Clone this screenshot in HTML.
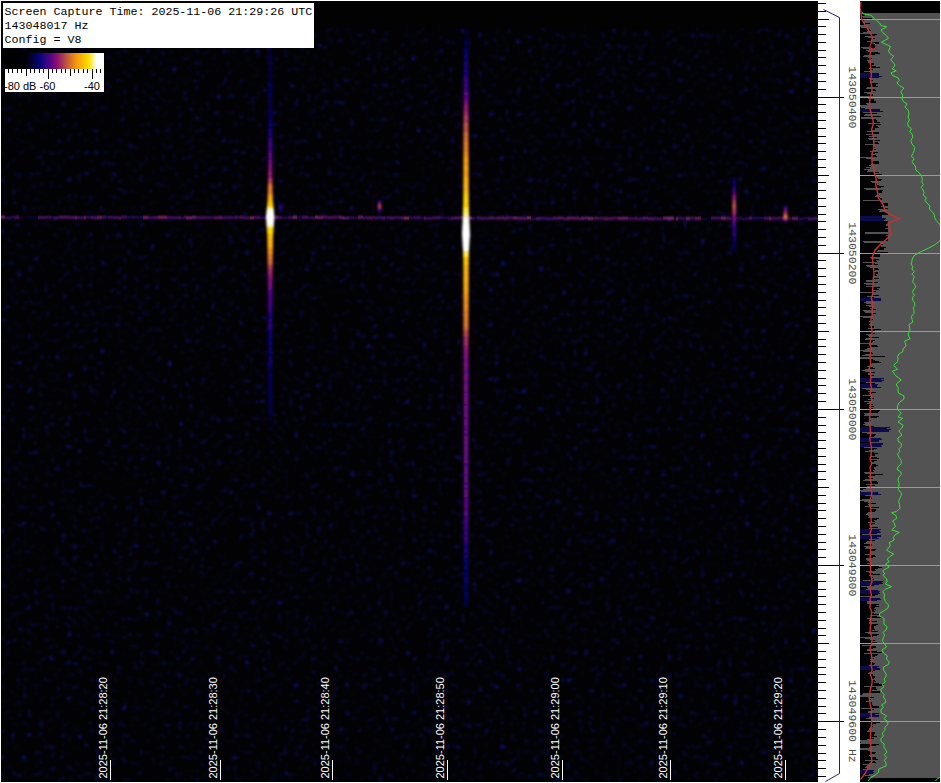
<!DOCTYPE html><html><head><meta charset="utf-8"><style>html,body{margin:0;padding:0;background:#fff;width:941px;height:783px;overflow:hidden;position:relative}.ab{position:absolute}.mono{font-family:"Liberation Mono",monospace}.sans{font-family:"Liberation Sans",sans-serif}</style></head><body><svg class="ab" style="left:0;top:0" width="941" height="783" viewBox="0 0 941 783" shape-rendering="crispEdges"><defs><filter id="bl" x="-20%" y="-300%" width="140%" height="700%"><feGaussianBlur stdDeviation="0.6 0.9"/></filter><filter id="bl2" x="-50%" y="-50%" width="200%" height="200%"><feGaussianBlur stdDeviation="0.8 1.2"/></filter><clipPath id="spc"><rect x="1" y="1" width="817" height="781"/></clipPath><clipPath id="pnc"><rect x="860" y="1" width="80" height="781"/></clipPath></defs><rect x="1" y="1" width="817" height="781" fill="#020203"/><defs><filter id="nz" filterUnits="userSpaceOnUse" x="1" y="28" width="817" height="754" color-interpolation-filters="sRGB"><feTurbulence type="fractalNoise" baseFrequency="0.18" numOctaves="2" seed="5" result="t"/><feColorMatrix in="t" type="matrix" values="0 0 0 0 0  0 0 0 0 0  1 0 0 0 0  0 0 0 0 1"/><feComponentTransfer><feFuncB type="table" tableValues="0 0 0 0 0 0 0.01 0.11 0.36 0.6 0.85"/><feFuncA type="linear" slope="0" intercept="1"/></feComponentTransfer><feColorMatrix type="matrix" values="0 0 0.09 0 0.008  0 0 0.09 0 0.008  0 0 0.95 0 0.016  0 0 0 0 1"/><feGaussianBlur stdDeviation="0.8"/></filter></defs><rect x="1" y="28" width="817" height="754" fill="#000" filter="url(#nz)" shape-rendering="auto"/><g clip-path="url(#spc)" filter="url(#bl)" shape-rendering="auto"><rect x="1" y="216.14" width="4" height="2" fill="#a42d88"/><rect x="5" y="216.83" width="6" height="2" fill="#371175"/><rect x="11" y="216.16" width="3" height="2" fill="#320f71"/><rect x="14" y="216.55" width="2" height="2" fill="#531587"/><rect x="16" y="216.15" width="3" height="2" fill="#6a1a8a"/><rect x="19" y="216.14" width="6" height="2" fill="#0c0832"/><rect x="25" y="216.19" width="3" height="2" fill="#0c0832"/><rect x="28" y="216.18" width="4" height="2" fill="#0c0832"/><rect x="32" y="216.54" width="6" height="2" fill="#0c0832"/><rect x="38" y="216.50" width="2" height="2" fill="#6c1a8a"/><rect x="40" y="216.57" width="6" height="2" fill="#5e1789"/><rect x="46" y="216.24" width="5" height="2" fill="#5b1688"/><rect x="51" y="216.50" width="3" height="2" fill="#2e0e6d"/><rect x="54" y="216.88" width="4" height="2" fill="#5d1788"/><rect x="58" y="216.37" width="2" height="2" fill="#571688"/><rect x="60" y="216.16" width="5" height="2" fill="#7b1e8c"/><rect x="65" y="216.35" width="6" height="2" fill="#771d8b"/><rect x="71" y="216.46" width="4" height="2" fill="#6a1a8a"/><rect x="75" y="216.63" width="2" height="2" fill="#a72f87"/><rect x="77" y="216.56" width="2" height="2" fill="#5e1789"/><rect x="79" y="216.63" width="5" height="2" fill="#611889"/><rect x="84" y="216.59" width="2" height="2" fill="#a22c88"/><rect x="86" y="216.20" width="5" height="2" fill="#3e127b"/><rect x="91" y="216.50" width="3" height="2" fill="#791d8c"/><rect x="94" y="216.81" width="3" height="2" fill="#69198a"/><rect x="97" y="216.43" width="5" height="2" fill="#a02a89"/><rect x="102" y="216.28" width="4" height="2" fill="#611889"/><rect x="106" y="216.29" width="2" height="2" fill="#2b0e6b"/><rect x="108" y="216.33" width="5" height="2" fill="#581688"/><rect x="113" y="216.55" width="3" height="2" fill="#611889"/><rect x="116" y="216.59" width="3" height="2" fill="#67198a"/><rect x="119" y="216.86" width="2" height="2" fill="#771d8b"/><rect x="121" y="216.18" width="6" height="2" fill="#621889"/><rect x="127" y="216.27" width="5" height="2" fill="#250d66"/><rect x="132" y="216.18" width="3" height="2" fill="#381176"/><rect x="135" y="216.39" width="6" height="2" fill="#270d67"/><rect x="141" y="216.40" width="2" height="2" fill="#2a0e6a"/><rect x="143" y="216.48" width="4" height="2" fill="#ab3286"/><rect x="147" y="216.47" width="2" height="2" fill="#7d1e8c"/><rect x="149" y="216.70" width="5" height="2" fill="#561588"/><rect x="154" y="216.51" width="4" height="2" fill="#6f1b8a"/><rect x="158" y="216.22" width="3" height="2" fill="#a83087"/><rect x="161" y="216.34" width="6" height="2" fill="#b13684"/><rect x="167" y="216.39" width="2" height="2" fill="#5c1788"/><rect x="169" y="216.53" width="3" height="2" fill="#5a1688"/><rect x="172" y="216.75" width="6" height="2" fill="#5a1688"/><rect x="178" y="216.69" width="3" height="2" fill="#751c8b"/><rect x="181" y="216.68" width="3" height="2" fill="#341073"/><rect x="184" y="216.25" width="2" height="2" fill="#651989"/><rect x="186" y="216.85" width="6" height="2" fill="#a62e88"/><rect x="192" y="216.28" width="4" height="2" fill="#a32c88"/><rect x="196" y="216.49" width="3" height="2" fill="#5f1789"/><rect x="199" y="216.62" width="6" height="2" fill="#661989"/><rect x="205" y="216.41" width="2" height="2" fill="#551588"/><rect x="207" y="216.73" width="3" height="2" fill="#581688"/><rect x="210" y="216.68" width="4" height="2" fill="#441480"/><rect x="214" y="216.68" width="5" height="2" fill="#7b1d8c"/><rect x="219" y="216.57" width="3" height="2" fill="#97248c"/><rect x="222" y="216.76" width="5" height="2" fill="#571588"/><rect x="227" y="216.54" width="5" height="2" fill="#601889"/><rect x="232" y="216.68" width="3" height="2" fill="#3f127c"/><rect x="235" y="216.45" width="2" height="2" fill="#7a1d8c"/><rect x="237" y="216.30" width="3" height="2" fill="#591688"/><rect x="240" y="216.36" width="4" height="2" fill="#721c8b"/><rect x="244" y="216.83" width="6" height="2" fill="#561588"/><rect x="250" y="216.75" width="4" height="2" fill="#ad3485"/><rect x="254" y="216.50" width="6" height="2" fill="#791d8c"/><rect x="260" y="216.80" width="6" height="2" fill="#351073"/><rect x="266" y="216.22" width="3" height="2" fill="#731c8b"/><rect x="269" y="216.55" width="3" height="2" fill="#711b8b"/><rect x="272" y="216.49" width="4" height="2" fill="#68198a"/><rect x="276" y="216.25" width="2" height="2" fill="#98248b"/><rect x="278" y="216.55" width="2" height="2" fill="#67198a"/><rect x="280" y="216.50" width="2" height="2" fill="#6c1a8a"/><rect x="282" y="216.51" width="6" height="2" fill="#2d0e6c"/><rect x="288" y="216.52" width="5" height="2" fill="#5b1688"/><rect x="293" y="216.26" width="4" height="2" fill="#b53983"/><rect x="297" y="216.45" width="5" height="2" fill="#270d68"/><rect x="302" y="216.28" width="2" height="2" fill="#631889"/><rect x="304" y="216.24" width="4" height="2" fill="#781d8b"/><rect x="308" y="216.90" width="4" height="2" fill="#42137e"/><rect x="312" y="216.85" width="3" height="2" fill="#541587"/><rect x="315" y="216.28" width="3" height="2" fill="#b33884"/><rect x="318" y="216.50" width="5" height="2" fill="#a42d88"/><rect x="323" y="216.19" width="4" height="2" fill="#701b8b"/><rect x="327" y="216.50" width="6" height="2" fill="#701b8b"/><rect x="333" y="216.26" width="6" height="2" fill="#67198a"/><rect x="339" y="216.44" width="3" height="2" fill="#9a268b"/><rect x="342" y="216.84" width="2" height="2" fill="#9c288a"/><rect x="344" y="217.00" width="5" height="2" fill="#6e1b8a"/><rect x="349" y="216.72" width="5" height="2" fill="#431380"/><rect x="354" y="216.83" width="4" height="2" fill="#250c66"/><rect x="358" y="216.31" width="5" height="2" fill="#9f2a89"/><rect x="363" y="216.99" width="2" height="2" fill="#541587"/><rect x="365" y="216.33" width="2" height="2" fill="#551588"/><rect x="367" y="216.82" width="6" height="2" fill="#791d8c"/><rect x="373" y="216.43" width="2" height="2" fill="#5b1688"/><rect x="375" y="217.10" width="3" height="2" fill="#581688"/><rect x="378" y="216.72" width="4" height="2" fill="#591688"/><rect x="382" y="217.17" width="3" height="2" fill="#741c8b"/><rect x="385" y="216.82" width="2" height="2" fill="#3d127a"/><rect x="387" y="216.75" width="3" height="2" fill="#5b1688"/><rect x="390" y="217.11" width="5" height="2" fill="#69198a"/><rect x="395" y="216.60" width="6" height="2" fill="#5a1688"/><rect x="401" y="216.95" width="3" height="2" fill="#701b8b"/><rect x="404" y="217.12" width="5" height="2" fill="#b83c82"/><rect x="409" y="216.67" width="2" height="2" fill="#3d127a"/><rect x="411" y="216.77" width="3" height="2" fill="#3a1178"/><rect x="414" y="216.67" width="6" height="2" fill="#5d1788"/><rect x="420" y="216.72" width="4" height="2" fill="#290d6a"/><rect x="424" y="217.29" width="2" height="2" fill="#7b1e8c"/><rect x="426" y="217.23" width="6" height="2" fill="#521487"/><rect x="432" y="216.85" width="3" height="2" fill="#501487"/><rect x="435" y="216.75" width="5" height="2" fill="#6e1b8a"/><rect x="440" y="216.68" width="2" height="2" fill="#40137d"/><rect x="442" y="216.82" width="6" height="2" fill="#240c65"/><rect x="448" y="217.28" width="3" height="2" fill="#451481"/><rect x="451" y="217.31" width="3" height="2" fill="#701b8b"/><rect x="454" y="217.01" width="5" height="2" fill="#701b8b"/><rect x="459" y="216.67" width="4" height="2" fill="#6d1a8a"/><rect x="463" y="217.29" width="6" height="2" fill="#711b8b"/><rect x="469" y="217.12" width="3" height="2" fill="#b03684"/><rect x="472" y="217.39" width="2" height="2" fill="#6a1a8a"/><rect x="474" y="217.19" width="3" height="2" fill="#240c65"/><rect x="477" y="216.73" width="2" height="2" fill="#641989"/><rect x="479" y="217.09" width="2" height="2" fill="#6f1b8a"/><rect x="481" y="217.45" width="2" height="2" fill="#6e1d85"/><rect x="483" y="217.31" width="6" height="2" fill="#5c1a7a"/><rect x="489" y="216.94" width="5" height="2" fill="#6e1d85"/><rect x="494" y="217.11" width="3" height="2" fill="#5f1a7b"/><rect x="497" y="216.99" width="5" height="2" fill="#641b80"/><rect x="502" y="216.84" width="2" height="2" fill="#7d2087"/><rect x="504" y="217.33" width="3" height="2" fill="#7d2087"/><rect x="507" y="216.84" width="6" height="2" fill="#6d1c85"/><rect x="513" y="216.98" width="4" height="2" fill="#982687"/><rect x="517" y="217.20" width="5" height="2" fill="#7a1f87"/><rect x="522" y="217.28" width="5" height="2" fill="#7d1e8c"/><rect x="527" y="216.87" width="4" height="2" fill="#b73a83"/><rect x="531" y="217.67" width="5" height="2" fill="#351073"/><rect x="536" y="217.63" width="4" height="2" fill="#791d8c"/><rect x="540" y="217.32" width="2" height="2" fill="#561588"/><rect x="542" y="217.31" width="4" height="2" fill="#40137d"/><rect x="546" y="217.64" width="2" height="2" fill="#5a1688"/><rect x="548" y="217.69" width="5" height="2" fill="#571688"/><rect x="553" y="217.28" width="5" height="2" fill="#711b8b"/><rect x="558" y="216.96" width="5" height="2" fill="#761c8b"/><rect x="563" y="217.72" width="4" height="2" fill="#6f1d86"/><rect x="567" y="217.29" width="2" height="2" fill="#9c2986"/><rect x="569" y="217.06" width="5" height="2" fill="#832187"/><rect x="574" y="217.24" width="5" height="2" fill="#832187"/><rect x="579" y="217.78" width="2" height="2" fill="#741e86"/><rect x="581" y="217.29" width="3" height="2" fill="#9f2c86"/><rect x="584" y="217.07" width="4" height="2" fill="#771e86"/><rect x="588" y="217.50" width="5" height="2" fill="#aa3383"/><rect x="593" y="217.44" width="2" height="2" fill="#611b7d"/><rect x="595" y="217.12" width="3" height="2" fill="#741e86"/><rect x="598" y="217.37" width="6" height="2" fill="#5b1a78"/><rect x="604" y="217.62" width="4" height="2" fill="#802087"/><rect x="608" y="217.55" width="5" height="2" fill="#741e86"/><rect x="613" y="217.16" width="5" height="2" fill="#5f1a7b"/><rect x="618" y="217.28" width="6" height="2" fill="#a02c85"/><rect x="624" y="217.21" width="4" height="2" fill="#a02c86"/><rect x="628" y="217.54" width="3" height="2" fill="#551873"/><rect x="631" y="217.56" width="4" height="2" fill="#561875"/><rect x="635" y="217.43" width="2" height="2" fill="#771e86"/><rect x="637" y="217.70" width="6" height="2" fill="#561875"/><rect x="643" y="217.20" width="5" height="2" fill="#7c1e8c"/><rect x="648" y="217.78" width="6" height="2" fill="#741c8b"/><rect x="654" y="217.42" width="2" height="2" fill="#5b1688"/><rect x="656" y="217.75" width="5" height="2" fill="#5e1789"/><rect x="661" y="217.71" width="2" height="2" fill="#320f71"/><rect x="663" y="217.16" width="5" height="2" fill="#a72f87"/><rect x="668" y="217.30" width="6" height="2" fill="#b83b82"/><rect x="674" y="217.88" width="2" height="2" fill="#280d69"/><rect x="676" y="217.62" width="2" height="2" fill="#af3585"/><rect x="678" y="217.10" width="5" height="2" fill="#3e127b"/><rect x="683" y="217.62" width="3" height="2" fill="#431380"/><rect x="686" y="217.52" width="4" height="2" fill="#ac3386"/><rect x="690" y="217.16" width="5" height="2" fill="#551588"/><rect x="695" y="217.31" width="6" height="2" fill="#9d288a"/><rect x="701" y="217.90" width="6" height="2" fill="#0c0832"/><rect x="707" y="217.81" width="4" height="2" fill="#0c0832"/><rect x="711" y="217.12" width="5" height="2" fill="#69198a"/><rect x="716" y="217.12" width="5" height="2" fill="#5e1789"/><rect x="721" y="217.16" width="5" height="2" fill="#ad3386"/><rect x="726" y="217.28" width="3" height="2" fill="#7a1d8c"/><rect x="729" y="217.39" width="2" height="2" fill="#701b8b"/><rect x="731" y="217.69" width="5" height="2" fill="#3f127c"/><rect x="736" y="217.26" width="6" height="2" fill="#341073"/><rect x="742" y="217.71" width="3" height="2" fill="#2b0e6b"/><rect x="745" y="217.59" width="4" height="2" fill="#391177"/><rect x="749" y="217.15" width="3" height="2" fill="#791d8c"/><rect x="752" y="217.27" width="6" height="2" fill="#310f70"/><rect x="758" y="217.15" width="6" height="2" fill="#250c66"/><rect x="764" y="217.35" width="5" height="2" fill="#701b8b"/><rect x="769" y="217.36" width="2" height="2" fill="#b73a83"/><rect x="771" y="217.47" width="3" height="2" fill="#68198a"/><rect x="774" y="217.40" width="4" height="2" fill="#611889"/><rect x="778" y="217.16" width="4" height="2" fill="#551588"/><rect x="782" y="217.20" width="2" height="2" fill="#7b1e8c"/><rect x="784" y="217.35" width="3" height="2" fill="#731c8b"/><rect x="787" y="217.26" width="5" height="2" fill="#3c1279"/><rect x="792" y="217.39" width="6" height="2" fill="#9d288a"/><rect x="798" y="217.75" width="5" height="2" fill="#310f70"/><rect x="803" y="217.15" width="5" height="2" fill="#240c65"/><rect x="808" y="217.82" width="2" height="2" fill="#721b8b"/><rect x="810" y="217.86" width="4" height="2" fill="#5f1789"/><rect x="814" y="217.35" width="2" height="2" fill="#701b8b"/><rect x="816" y="217.58" width="4" height="2" fill="#701b8b"/></g><g filter="url(#bl2)" shape-rendering="auto"><rect x="268.60" y="48" width="3.20" height="1" fill="#03034c"/><rect x="268.59" y="49" width="3.21" height="1" fill="#04045a"/><rect x="268.59" y="50" width="3.22" height="1" fill="#00000a"/><rect x="268.59" y="51" width="3.23" height="1" fill="#030350"/><rect x="268.58" y="52" width="3.24" height="1" fill="#00000f"/><rect x="268.58" y="53" width="3.24" height="1" fill="#030348"/><rect x="268.57" y="54" width="3.25" height="1" fill="#020232"/><rect x="268.57" y="55" width="3.26" height="1" fill="#03034f"/><rect x="268.57" y="56" width="3.27" height="1" fill="#030351"/><rect x="268.56" y="57" width="3.27" height="1" fill="#04045d"/><rect x="268.56" y="58" width="3.28" height="1" fill="#030355"/><rect x="268.55" y="59" width="3.29" height="1" fill="#010117"/><rect x="268.55" y="60" width="3.30" height="1" fill="#02023a"/><rect x="268.55" y="61" width="3.31" height="1" fill="#00000e"/><rect x="268.54" y="62" width="3.31" height="1" fill="#040463"/><rect x="268.54" y="63" width="3.32" height="1" fill="#02022a"/><rect x="268.54" y="64" width="3.33" height="1" fill="#03034f"/><rect x="268.53" y="65" width="3.34" height="1" fill="#01011e"/><rect x="268.53" y="66" width="3.35" height="1" fill="#010127"/><rect x="268.52" y="67" width="3.35" height="1" fill="#040461"/><rect x="268.52" y="68" width="3.36" height="1" fill="#02023d"/><rect x="268.52" y="69" width="3.37" height="1" fill="#04045b"/><rect x="268.51" y="70" width="3.38" height="1" fill="#03034b"/><rect x="268.51" y="71" width="3.39" height="1" fill="#030344"/><rect x="268.50" y="72" width="3.39" height="1" fill="#02023a"/><rect x="268.50" y="73" width="3.40" height="1" fill="#010125"/><rect x="268.50" y="74" width="3.41" height="1" fill="#02023d"/><rect x="268.49" y="75" width="3.42" height="1" fill="#030354"/><rect x="268.49" y="76" width="3.42" height="1" fill="#030345"/><rect x="268.48" y="77" width="3.43" height="1" fill="#03034c"/><rect x="268.48" y="78" width="3.44" height="1" fill="#020229"/><rect x="268.48" y="79" width="3.45" height="1" fill="#030343"/><rect x="268.47" y="80" width="3.46" height="1" fill="#010126"/><rect x="268.47" y="81" width="3.46" height="1" fill="#010124"/><rect x="268.46" y="82" width="3.47" height="1" fill="#030357"/><rect x="268.46" y="83" width="3.48" height="1" fill="#020232"/><rect x="268.46" y="84" width="3.49" height="1" fill="#030346"/><rect x="268.45" y="85" width="3.50" height="1" fill="#06057a"/><rect x="268.45" y="86" width="3.50" height="1" fill="#05057a"/><rect x="268.44" y="87" width="3.51" height="1" fill="#020232"/><rect x="268.44" y="88" width="3.52" height="1" fill="#02022f"/><rect x="268.44" y="89" width="3.53" height="1" fill="#03034e"/><rect x="268.43" y="90" width="3.53" height="1" fill="#050576"/><rect x="268.43" y="91" width="3.54" height="1" fill="#02023b"/><rect x="268.42" y="92" width="3.55" height="1" fill="#040457"/><rect x="268.42" y="93" width="3.56" height="1" fill="#04046e"/><rect x="268.42" y="94" width="3.57" height="1" fill="#04046d"/><rect x="268.41" y="95" width="3.57" height="1" fill="#050570"/><rect x="268.41" y="96" width="3.58" height="1" fill="#030344"/><rect x="268.41" y="97" width="3.59" height="1" fill="#030344"/><rect x="268.40" y="98" width="3.60" height="1" fill="#030343"/><rect x="268.40" y="99" width="3.61" height="1" fill="#030343"/><rect x="268.39" y="100" width="3.61" height="1" fill="#030344"/><rect x="268.39" y="101" width="3.62" height="1" fill="#030356"/><rect x="268.39" y="102" width="3.63" height="1" fill="#02023f"/><rect x="268.38" y="103" width="3.64" height="1" fill="#030344"/><rect x="268.38" y="104" width="3.64" height="1" fill="#030349"/><rect x="268.37" y="105" width="3.65" height="1" fill="#0e057c"/><rect x="268.37" y="106" width="3.66" height="1" fill="#030343"/><rect x="268.37" y="107" width="3.67" height="1" fill="#020238"/><rect x="268.36" y="108" width="3.68" height="1" fill="#03034a"/><rect x="268.36" y="109" width="3.68" height="1" fill="#03034a"/><rect x="268.35" y="110" width="3.69" height="1" fill="#040465"/><rect x="268.35" y="111" width="3.70" height="1" fill="#050571"/><rect x="268.35" y="112" width="3.71" height="1" fill="#02023f"/><rect x="268.34" y="113" width="3.72" height="1" fill="#040462"/><rect x="268.34" y="114" width="3.72" height="1" fill="#02023b"/><rect x="268.33" y="115" width="3.73" height="1" fill="#020239"/><rect x="268.33" y="116" width="3.74" height="1" fill="#14057d"/><rect x="268.33" y="117" width="3.75" height="1" fill="#03034f"/><rect x="268.32" y="118" width="3.76" height="1" fill="#040464"/><rect x="268.32" y="119" width="3.76" height="1" fill="#04045e"/><rect x="268.31" y="120" width="3.77" height="1" fill="#17057d"/><rect x="268.31" y="121" width="3.78" height="1" fill="#030356"/><rect x="268.31" y="122" width="3.79" height="1" fill="#030348"/><rect x="268.30" y="123" width="3.79" height="1" fill="#08057b"/><rect x="268.30" y="124" width="3.80" height="1" fill="#1e057e"/><rect x="268.29" y="125" width="3.81" height="1" fill="#04045f"/><rect x="268.29" y="126" width="3.82" height="1" fill="#030357"/><rect x="268.29" y="127" width="3.83" height="1" fill="#0c057b"/><rect x="268.28" y="128" width="3.83" height="1" fill="#040466"/><rect x="268.28" y="129" width="3.84" height="1" fill="#19057d"/><rect x="268.28" y="130" width="3.85" height="1" fill="#290580"/><rect x="268.27" y="131" width="3.86" height="1" fill="#23057f"/><rect x="268.27" y="132" width="3.87" height="1" fill="#040462"/><rect x="268.26" y="133" width="3.87" height="1" fill="#260580"/><rect x="268.26" y="134" width="3.88" height="1" fill="#2f0581"/><rect x="268.26" y="135" width="3.89" height="1" fill="#14057d"/><rect x="268.25" y="136" width="3.90" height="1" fill="#050571"/><rect x="268.25" y="137" width="3.90" height="1" fill="#19057d"/><rect x="268.24" y="138" width="3.91" height="1" fill="#050578"/><rect x="268.24" y="139" width="3.92" height="1" fill="#540686"/><rect x="268.24" y="140" width="3.93" height="1" fill="#08057b"/><rect x="268.23" y="141" width="3.94" height="1" fill="#430585"/><rect x="268.23" y="142" width="3.94" height="1" fill="#4c0586"/><rect x="268.22" y="143" width="3.95" height="1" fill="#4a0586"/><rect x="268.22" y="144" width="3.96" height="1" fill="#4d0586"/><rect x="268.22" y="145" width="3.97" height="1" fill="#3a0583"/><rect x="268.21" y="146" width="3.98" height="1" fill="#3a0583"/><rect x="268.21" y="147" width="3.98" height="1" fill="#490586"/><rect x="268.20" y="148" width="3.99" height="1" fill="#2f0581"/><rect x="268.20" y="149" width="4.00" height="1" fill="#2f0581"/><rect x="268.20" y="150" width="4.01" height="1" fill="#490586"/><rect x="268.19" y="151" width="4.01" height="1" fill="#4b0586"/><rect x="268.19" y="152" width="4.02" height="1" fill="#490586"/><rect x="268.18" y="153" width="4.03" height="1" fill="#620881"/><rect x="268.18" y="154" width="4.04" height="1" fill="#5d0783"/><rect x="268.18" y="155" width="4.05" height="1" fill="#430585"/><rect x="268.17" y="156" width="4.05" height="1" fill="#5a0784"/><rect x="268.17" y="157" width="4.06" height="1" fill="#640880"/><rect x="268.16" y="158" width="4.07" height="1" fill="#570685"/><rect x="268.16" y="159" width="4.08" height="1" fill="#520586"/><rect x="268.16" y="160" width="4.09" height="1" fill="#800d77"/><rect x="268.15" y="161" width="4.09" height="1" fill="#6f0a7d"/><rect x="268.15" y="162" width="4.10" height="1" fill="#630881"/><rect x="268.15" y="163" width="4.11" height="1" fill="#4f0587"/><rect x="268.14" y="164" width="4.12" height="1" fill="#7b0c79"/><rect x="268.14" y="165" width="4.13" height="1" fill="#870e75"/><rect x="268.13" y="166" width="4.13" height="1" fill="#6f0a7d"/><rect x="268.13" y="167" width="4.14" height="1" fill="#5c0783"/><rect x="268.13" y="168" width="4.15" height="1" fill="#8d1072"/><rect x="268.12" y="169" width="4.16" height="1" fill="#91156e"/><rect x="268.12" y="170" width="4.16" height="1" fill="#8d1172"/><rect x="268.11" y="171" width="4.17" height="1" fill="#830e76"/><rect x="268.11" y="172" width="4.18" height="1" fill="#880e74"/><rect x="268.11" y="173" width="4.19" height="1" fill="#a12b5e"/><rect x="268.10" y="174" width="4.20" height="1" fill="#90156f"/><rect x="268.09" y="175" width="4.22" height="1" fill="#860e75"/><rect x="268.07" y="176" width="4.26" height="1" fill="#880e74"/><rect x="268.05" y="177" width="4.30" height="1" fill="#8d1172"/><rect x="268.03" y="178" width="4.34" height="1" fill="#a73358"/><rect x="268.01" y="179" width="4.38" height="1" fill="#a5325a"/><rect x="267.99" y="180" width="4.42" height="1" fill="#bc5043"/><rect x="267.97" y="181" width="4.46" height="1" fill="#aa3955"/><rect x="267.95" y="182" width="4.50" height="1" fill="#ae3e51"/><rect x="267.93" y="183" width="4.54" height="1" fill="#b94c46"/><rect x="267.91" y="184" width="4.58" height="1" fill="#d87328"/><rect x="267.89" y="185" width="4.62" height="1" fill="#cc6433"/><rect x="267.87" y="186" width="4.66" height="1" fill="#d77129"/><rect x="267.85" y="187" width="4.70" height="1" fill="#e98718"/><rect x="267.83" y="188" width="4.74" height="1" fill="#e6831b"/><rect x="267.81" y="189" width="4.78" height="1" fill="#d46d2c"/><rect x="267.79" y="190" width="4.82" height="1" fill="#df7a22"/><rect x="267.77" y="191" width="4.86" height="1" fill="#db7625"/><rect x="267.75" y="192" width="4.90" height="1" fill="#e07c21"/><rect x="267.73" y="193" width="4.94" height="1" fill="#e07c21"/><rect x="267.71" y="194" width="4.98" height="1" fill="#f09011"/><rect x="267.69" y="195" width="5.02" height="1" fill="#f7a40a"/><rect x="267.67" y="196" width="5.06" height="1" fill="#f8aa09"/><rect x="267.65" y="197" width="5.10" height="1" fill="#f8af08"/><rect x="267.63" y="198" width="5.14" height="1" fill="#f6a00a"/><rect x="267.61" y="199" width="5.18" height="1" fill="#fab906"/><rect x="267.55" y="200" width="5.30" height="1" fill="#f69e0b"/><rect x="267.45" y="201" width="5.49" height="1" fill="#fbc504"/><rect x="267.36" y="202" width="5.69" height="1" fill="#f9b207"/><rect x="267.26" y="203" width="5.88" height="1" fill="#fbc205"/><rect x="267.16" y="204" width="6.07" height="1" fill="#fcc804"/><rect x="267.07" y="205" width="6.27" height="1" fill="#faba06"/><rect x="266.97" y="206" width="6.46" height="1" fill="#ffde00"/><rect x="266.87" y="207" width="6.66" height="1" fill="#ffe62d"/><rect x="266.77" y="208" width="6.85" height="1" fill="#fff4a3"/><rect x="266.68" y="209" width="7.04" height="1" fill="#fff5ac"/><rect x="266.58" y="210" width="7.24" height="1" fill="#ffffff"/><rect x="266.48" y="211" width="7.43" height="1" fill="#ffffff"/><rect x="266.39" y="212" width="7.63" height="1" fill="#ffffff"/><rect x="266.29" y="213" width="7.82" height="1" fill="#ffffff"/><rect x="266.19" y="214" width="8.01" height="1" fill="#ffffff"/><rect x="266.10" y="215" width="8.21" height="1" fill="#ffffff"/><rect x="266.00" y="216" width="8.40" height="1" fill="#ffffff"/><rect x="265.99" y="217" width="8.43" height="1" fill="#ffffff"/><rect x="266.06" y="218" width="8.28" height="1" fill="#ffffff"/><rect x="266.14" y="219" width="8.12" height="1" fill="#ffffff"/><rect x="266.21" y="220" width="7.97" height="1" fill="#ffffff"/><rect x="266.29" y="221" width="7.83" height="1" fill="#ffffff"/><rect x="266.36" y="222" width="7.67" height="1" fill="#ffffff"/><rect x="266.44" y="223" width="7.53" height="1" fill="#fff6b0"/><rect x="266.51" y="224" width="7.38" height="1" fill="#ffffff"/><rect x="266.59" y="225" width="7.22" height="1" fill="#fff9ce"/><rect x="266.66" y="226" width="7.08" height="1" fill="#ffed66"/><rect x="266.74" y="227" width="6.92" height="1" fill="#ffe526"/><rect x="266.81" y="228" width="6.78" height="1" fill="#fdd302"/><rect x="266.89" y="229" width="6.62" height="1" fill="#fdd202"/><rect x="266.96" y="230" width="6.47" height="1" fill="#fdd103"/><rect x="267.04" y="231" width="6.32" height="1" fill="#ffde01"/><rect x="267.11" y="232" width="6.17" height="1" fill="#fed702"/><rect x="267.19" y="233" width="6.03" height="1" fill="#fdcf03"/><rect x="267.26" y="234" width="5.88" height="1" fill="#fabe06"/><rect x="267.31" y="235" width="5.79" height="1" fill="#fab906"/><rect x="267.32" y="236" width="5.76" height="1" fill="#fabb06"/><rect x="267.33" y="237" width="5.74" height="1" fill="#f9b707"/><rect x="267.34" y="238" width="5.71" height="1" fill="#fab906"/><rect x="267.36" y="239" width="5.69" height="1" fill="#f7a909"/><rect x="267.37" y="240" width="5.66" height="1" fill="#f69e0b"/><rect x="267.38" y="241" width="5.64" height="1" fill="#fbc205"/><rect x="267.39" y="242" width="5.62" height="1" fill="#f8aa09"/><rect x="267.40" y="243" width="5.59" height="1" fill="#f7a609"/><rect x="267.42" y="244" width="5.57" height="1" fill="#f8a909"/><rect x="267.43" y="245" width="5.54" height="1" fill="#f8ae08"/><rect x="267.44" y="246" width="5.52" height="1" fill="#f8ab09"/><rect x="267.45" y="247" width="5.49" height="1" fill="#f7a709"/><rect x="267.47" y="248" width="5.47" height="1" fill="#f2930e"/><rect x="267.48" y="249" width="5.44" height="1" fill="#e27f1e"/><rect x="267.49" y="250" width="5.42" height="1" fill="#ea8916"/><rect x="267.50" y="251" width="5.39" height="1" fill="#e78519"/><rect x="267.52" y="252" width="5.37" height="1" fill="#f5960c"/><rect x="267.53" y="253" width="5.34" height="1" fill="#e6841a"/><rect x="267.54" y="254" width="5.32" height="1" fill="#e98718"/><rect x="267.55" y="255" width="5.30" height="1" fill="#ce6632"/><rect x="267.56" y="256" width="5.27" height="1" fill="#ce6632"/><rect x="267.58" y="257" width="5.25" height="1" fill="#e98817"/><rect x="267.59" y="258" width="5.22" height="1" fill="#ce6731"/><rect x="267.60" y="259" width="5.20" height="1" fill="#db7625"/><rect x="267.61" y="260" width="5.17" height="1" fill="#bf5341"/><rect x="267.63" y="261" width="5.15" height="1" fill="#d66f2a"/><rect x="267.64" y="262" width="5.12" height="1" fill="#d77129"/><rect x="267.65" y="263" width="5.10" height="1" fill="#c85f37"/><rect x="267.66" y="264" width="5.07" height="1" fill="#c85f37"/><rect x="267.68" y="265" width="5.05" height="1" fill="#a63359"/><rect x="267.69" y="266" width="5.02" height="1" fill="#a32f5c"/><rect x="267.70" y="267" width="5.00" height="1" fill="#b3444c"/><rect x="267.71" y="268" width="4.98" height="1" fill="#b1414e"/><rect x="267.72" y="269" width="4.95" height="1" fill="#961d69"/><rect x="267.74" y="270" width="4.93" height="1" fill="#92176d"/><rect x="267.75" y="271" width="4.90" height="1" fill="#a93756"/><rect x="267.76" y="272" width="4.88" height="1" fill="#8e1171"/><rect x="267.77" y="273" width="4.85" height="1" fill="#9c2563"/><rect x="267.79" y="274" width="4.83" height="1" fill="#971e68"/><rect x="267.80" y="275" width="4.80" height="1" fill="#8f1470"/><rect x="267.81" y="276" width="4.78" height="1" fill="#8f1370"/><rect x="267.82" y="277" width="4.75" height="1" fill="#700a7c"/><rect x="267.84" y="278" width="4.73" height="1" fill="#90146f"/><rect x="267.85" y="279" width="4.70" height="1" fill="#820d76"/><rect x="267.86" y="280" width="4.68" height="1" fill="#6a097e"/><rect x="267.87" y="281" width="4.66" height="1" fill="#6b0a7e"/><rect x="267.88" y="282" width="4.63" height="1" fill="#7a0c79"/><rect x="267.90" y="283" width="4.61" height="1" fill="#890e74"/><rect x="267.91" y="284" width="4.58" height="1" fill="#6b0a7e"/><rect x="267.92" y="285" width="4.56" height="1" fill="#5c0783"/><rect x="267.93" y="286" width="4.53" height="1" fill="#840e76"/><rect x="267.95" y="287" width="4.51" height="1" fill="#640880"/><rect x="267.96" y="288" width="4.48" height="1" fill="#68097f"/><rect x="267.97" y="289" width="4.46" height="1" fill="#67097f"/><rect x="267.98" y="290" width="4.43" height="1" fill="#4e0587"/><rect x="268.00" y="291" width="4.41" height="1" fill="#530586"/><rect x="268.01" y="292" width="4.38" height="1" fill="#470585"/><rect x="268.02" y="293" width="4.36" height="1" fill="#4f0587"/><rect x="268.03" y="294" width="4.34" height="1" fill="#5a0784"/><rect x="268.04" y="295" width="4.31" height="1" fill="#440585"/><rect x="268.06" y="296" width="4.29" height="1" fill="#440585"/><rect x="268.07" y="297" width="4.26" height="1" fill="#440585"/><rect x="268.08" y="298" width="4.24" height="1" fill="#590684"/><rect x="268.09" y="299" width="4.21" height="1" fill="#3a0583"/><rect x="268.10" y="300" width="4.20" height="1" fill="#520586"/><rect x="268.11" y="301" width="4.19" height="1" fill="#2b0581"/><rect x="268.11" y="302" width="4.18" height="1" fill="#540686"/><rect x="268.11" y="303" width="4.17" height="1" fill="#580684"/><rect x="268.12" y="304" width="4.17" height="1" fill="#3b0583"/><rect x="268.12" y="305" width="4.16" height="1" fill="#3c0584"/><rect x="268.12" y="306" width="4.15" height="1" fill="#430585"/><rect x="268.13" y="307" width="4.14" height="1" fill="#4c0586"/><rect x="268.13" y="308" width="4.14" height="1" fill="#290580"/><rect x="268.14" y="309" width="4.13" height="1" fill="#340582"/><rect x="268.14" y="310" width="4.12" height="1" fill="#4c0586"/><rect x="268.14" y="311" width="4.11" height="1" fill="#410584"/><rect x="268.15" y="312" width="4.11" height="1" fill="#21057f"/><rect x="268.15" y="313" width="4.10" height="1" fill="#20057f"/><rect x="268.15" y="314" width="4.09" height="1" fill="#1d057e"/><rect x="268.16" y="315" width="4.09" height="1" fill="#09057b"/><rect x="268.16" y="316" width="4.08" height="1" fill="#17057d"/><rect x="268.16" y="317" width="4.07" height="1" fill="#050575"/><rect x="268.17" y="318" width="4.06" height="1" fill="#0b057b"/><rect x="268.17" y="319" width="4.06" height="1" fill="#290580"/><rect x="268.18" y="320" width="4.05" height="1" fill="#430585"/><rect x="268.18" y="321" width="4.04" height="1" fill="#0b057b"/><rect x="268.18" y="322" width="4.03" height="1" fill="#1b057e"/><rect x="268.19" y="323" width="4.03" height="1" fill="#09057b"/><rect x="268.19" y="324" width="4.02" height="1" fill="#3d0584"/><rect x="268.19" y="325" width="4.01" height="1" fill="#330582"/><rect x="268.20" y="326" width="4.00" height="1" fill="#360583"/><rect x="268.20" y="327" width="4.00" height="1" fill="#320582"/><rect x="268.21" y="328" width="3.99" height="1" fill="#23057f"/><rect x="268.21" y="329" width="3.98" height="1" fill="#22057f"/><rect x="268.21" y="330" width="3.97" height="1" fill="#040469"/><rect x="268.22" y="331" width="3.97" height="1" fill="#05056f"/><rect x="268.22" y="332" width="3.96" height="1" fill="#16057d"/><rect x="268.22" y="333" width="3.95" height="1" fill="#050579"/><rect x="268.23" y="334" width="3.94" height="1" fill="#050573"/><rect x="268.23" y="335" width="3.94" height="1" fill="#030356"/><rect x="268.24" y="336" width="3.93" height="1" fill="#08057b"/><rect x="268.24" y="337" width="3.92" height="1" fill="#12057c"/><rect x="268.24" y="338" width="3.91" height="1" fill="#030353"/><rect x="268.25" y="339" width="3.91" height="1" fill="#030353"/><rect x="268.25" y="340" width="3.90" height="1" fill="#0c057b"/><rect x="268.25" y="341" width="3.89" height="1" fill="#040469"/><rect x="268.26" y="342" width="3.89" height="1" fill="#07057a"/><rect x="268.26" y="343" width="3.88" height="1" fill="#07057a"/><rect x="268.26" y="344" width="3.87" height="1" fill="#050571"/><rect x="268.27" y="345" width="3.86" height="1" fill="#040466"/><rect x="268.27" y="346" width="3.86" height="1" fill="#030356"/><rect x="268.28" y="347" width="3.85" height="1" fill="#04046a"/><rect x="268.28" y="348" width="3.84" height="1" fill="#1c057e"/><rect x="268.28" y="349" width="3.83" height="1" fill="#030356"/><rect x="268.29" y="350" width="3.83" height="1" fill="#030348"/><rect x="268.29" y="351" width="3.82" height="1" fill="#18057d"/><rect x="268.29" y="352" width="3.81" height="1" fill="#10057c"/><rect x="268.30" y="353" width="3.80" height="1" fill="#04046e"/><rect x="268.30" y="354" width="3.80" height="1" fill="#03034a"/><rect x="268.31" y="355" width="3.79" height="1" fill="#030350"/><rect x="268.31" y="356" width="3.78" height="1" fill="#0a057b"/><rect x="268.31" y="357" width="3.77" height="1" fill="#04045a"/><rect x="268.32" y="358" width="3.77" height="1" fill="#14057d"/><rect x="268.32" y="359" width="3.76" height="1" fill="#21057f"/><rect x="268.32" y="360" width="3.75" height="1" fill="#030345"/><rect x="268.33" y="361" width="3.74" height="1" fill="#13057c"/><rect x="268.33" y="362" width="3.74" height="1" fill="#19057d"/><rect x="268.34" y="363" width="3.73" height="1" fill="#050574"/><rect x="268.34" y="364" width="3.72" height="1" fill="#050572"/><rect x="268.34" y="365" width="3.71" height="1" fill="#050573"/><rect x="268.35" y="366" width="3.71" height="1" fill="#04046b"/><rect x="268.35" y="367" width="3.70" height="1" fill="#040468"/><rect x="268.35" y="368" width="3.69" height="1" fill="#030349"/><rect x="268.36" y="369" width="3.69" height="1" fill="#020239"/><rect x="268.36" y="370" width="3.68" height="1" fill="#02023e"/><rect x="268.36" y="371" width="3.67" height="1" fill="#02023a"/><rect x="268.37" y="372" width="3.66" height="1" fill="#030348"/><rect x="268.37" y="373" width="3.66" height="1" fill="#030345"/><rect x="268.38" y="374" width="3.65" height="1" fill="#12057c"/><rect x="268.38" y="375" width="3.64" height="1" fill="#02023e"/><rect x="268.38" y="376" width="3.63" height="1" fill="#04046c"/><rect x="268.39" y="377" width="3.63" height="1" fill="#050570"/><rect x="268.39" y="378" width="3.62" height="1" fill="#030345"/><rect x="268.39" y="379" width="3.61" height="1" fill="#040458"/><rect x="268.40" y="380" width="3.60" height="1" fill="#040461"/><rect x="268.40" y="381" width="3.60" height="1" fill="#04046b"/><rect x="268.41" y="382" width="3.59" height="1" fill="#04046b"/><rect x="268.41" y="383" width="3.58" height="1" fill="#030355"/><rect x="268.41" y="384" width="3.57" height="1" fill="#040467"/><rect x="268.42" y="385" width="3.57" height="1" fill="#04045c"/><rect x="268.42" y="386" width="3.56" height="1" fill="#020233"/><rect x="268.42" y="387" width="3.55" height="1" fill="#040466"/><rect x="268.43" y="388" width="3.54" height="1" fill="#10057c"/><rect x="268.43" y="389" width="3.54" height="1" fill="#04046d"/><rect x="268.44" y="390" width="3.53" height="1" fill="#030356"/><rect x="268.44" y="391" width="3.52" height="1" fill="#04045b"/><rect x="268.44" y="392" width="3.51" height="1" fill="#03034b"/><rect x="268.45" y="393" width="3.51" height="1" fill="#030350"/><rect x="268.45" y="394" width="3.50" height="1" fill="#06057a"/><rect x="268.45" y="395" width="3.49" height="1" fill="#02022e"/><rect x="268.46" y="396" width="3.49" height="1" fill="#040462"/><rect x="268.46" y="397" width="3.48" height="1" fill="#020235"/><rect x="268.46" y="398" width="3.47" height="1" fill="#0a057b"/><rect x="268.47" y="399" width="3.46" height="1" fill="#02023c"/><rect x="268.47" y="400" width="3.46" height="1" fill="#04045d"/><rect x="268.48" y="401" width="3.45" height="1" fill="#02022b"/><rect x="268.48" y="402" width="3.44" height="1" fill="#05056e"/><rect x="268.48" y="403" width="3.43" height="1" fill="#05056f"/><rect x="268.49" y="404" width="3.43" height="1" fill="#04046e"/><rect x="268.49" y="405" width="3.42" height="1" fill="#02022d"/><rect x="268.49" y="406" width="3.41" height="1" fill="#010117"/><rect x="268.50" y="407" width="3.40" height="1" fill="#03034a"/><rect x="268.50" y="408" width="3.40" height="1" fill="#03034b"/><rect x="268.51" y="409" width="3.39" height="1" fill="#030349"/><rect x="268.51" y="410" width="3.38" height="1" fill="#04045c"/><rect x="268.51" y="411" width="3.37" height="1" fill="#04045e"/><rect x="268.52" y="412" width="3.37" height="1" fill="#01011e"/><rect x="268.52" y="413" width="3.36" height="1" fill="#030355"/><rect x="268.52" y="414" width="3.35" height="1" fill="#03034f"/><rect x="268.53" y="415" width="3.34" height="1" fill="#000006"/><rect x="268.53" y="416" width="3.34" height="1" fill="#010127"/><rect x="268.54" y="417" width="3.33" height="1" fill="#000006"/><rect x="268.54" y="418" width="3.32" height="1" fill="#030346"/><rect x="268.54" y="419" width="3.31" height="1" fill="#02023d"/><rect x="268.55" y="420" width="3.31" height="1" fill="#000006"/><rect x="268.55" y="421" width="3.30" height="1" fill="#000006"/><rect x="268.55" y="422" width="3.29" height="1" fill="#02023c"/><rect x="268.56" y="423" width="3.29" height="1" fill="#000006"/><rect x="268.56" y="424" width="3.28" height="1" fill="#000007"/><rect x="268.56" y="425" width="3.27" height="1" fill="#010118"/><rect x="268.57" y="426" width="3.26" height="1" fill="#000006"/><rect x="268.57" y="427" width="3.26" height="1" fill="#020229"/><rect x="268.58" y="428" width="3.25" height="1" fill="#02022d"/><rect x="268.58" y="429" width="3.24" height="1" fill="#020230"/><rect x="268.58" y="430" width="3.23" height="1" fill="#010120"/><rect x="268.59" y="431" width="3.23" height="1" fill="#000006"/><rect x="268.59" y="432" width="3.22" height="1" fill="#000006"/><rect x="268.59" y="433" width="3.21" height="1" fill="#000006"/><rect x="268.60" y="434" width="3.20" height="1" fill="#000004"/></g><g filter="url(#bl2)" shape-rendering="auto"><rect x="464.25" y="28" width="3.51" height="1" fill="#000005"/><rect x="464.24" y="29" width="3.53" height="1" fill="#030346"/><rect x="464.23" y="30" width="3.55" height="1" fill="#000007"/><rect x="464.22" y="31" width="3.56" height="1" fill="#030346"/><rect x="464.21" y="32" width="3.58" height="1" fill="#030341"/><rect x="464.20" y="33" width="3.60" height="1" fill="#010120"/><rect x="464.19" y="34" width="3.62" height="1" fill="#020235"/><rect x="464.18" y="35" width="3.64" height="1" fill="#020236"/><rect x="464.17" y="36" width="3.65" height="1" fill="#010116"/><rect x="464.16" y="37" width="3.67" height="1" fill="#00000c"/><rect x="464.16" y="38" width="3.69" height="1" fill="#010117"/><rect x="464.15" y="39" width="3.71" height="1" fill="#030349"/><rect x="464.14" y="40" width="3.73" height="1" fill="#010122"/><rect x="464.13" y="41" width="3.74" height="1" fill="#050571"/><rect x="464.12" y="42" width="3.76" height="1" fill="#04045b"/><rect x="464.11" y="43" width="3.78" height="1" fill="#010121"/><rect x="464.10" y="44" width="3.80" height="1" fill="#02022e"/><rect x="464.09" y="45" width="3.82" height="1" fill="#040460"/><rect x="464.08" y="46" width="3.83" height="1" fill="#02022c"/><rect x="464.07" y="47" width="3.85" height="1" fill="#020232"/><rect x="464.06" y="48" width="3.87" height="1" fill="#020233"/><rect x="464.06" y="49" width="3.89" height="1" fill="#0b057b"/><rect x="464.05" y="50" width="3.91" height="1" fill="#06057a"/><rect x="464.04" y="51" width="3.92" height="1" fill="#030349"/><rect x="464.03" y="52" width="3.94" height="1" fill="#19057d"/><rect x="464.02" y="53" width="3.96" height="1" fill="#04046c"/><rect x="464.01" y="54" width="3.98" height="1" fill="#05057a"/><rect x="464.00" y="55" width="4.00" height="1" fill="#18057d"/><rect x="463.99" y="56" width="4.01" height="1" fill="#10057c"/><rect x="463.98" y="57" width="4.03" height="1" fill="#0e057c"/><rect x="463.97" y="58" width="4.05" height="1" fill="#040468"/><rect x="463.97" y="59" width="4.07" height="1" fill="#04045e"/><rect x="463.96" y="60" width="4.09" height="1" fill="#04045c"/><rect x="463.95" y="61" width="4.10" height="1" fill="#03034e"/><rect x="463.94" y="62" width="4.12" height="1" fill="#2a0580"/><rect x="463.93" y="63" width="4.14" height="1" fill="#290580"/><rect x="463.92" y="64" width="4.16" height="1" fill="#1e057e"/><rect x="463.91" y="65" width="4.18" height="1" fill="#04045b"/><rect x="463.90" y="66" width="4.20" height="1" fill="#21057f"/><rect x="463.89" y="67" width="4.21" height="1" fill="#19057e"/><rect x="463.88" y="68" width="4.23" height="1" fill="#0f057c"/><rect x="463.88" y="69" width="4.25" height="1" fill="#040467"/><rect x="463.87" y="70" width="4.27" height="1" fill="#2c0581"/><rect x="463.86" y="71" width="4.29" height="1" fill="#22057f"/><rect x="463.85" y="72" width="4.30" height="1" fill="#07057a"/><rect x="463.84" y="73" width="4.32" height="1" fill="#0c057b"/><rect x="463.83" y="74" width="4.34" height="1" fill="#08057a"/><rect x="463.82" y="75" width="4.36" height="1" fill="#11057c"/><rect x="463.81" y="76" width="4.38" height="1" fill="#430585"/><rect x="463.80" y="77" width="4.39" height="1" fill="#050572"/><rect x="463.79" y="78" width="4.41" height="1" fill="#3a0583"/><rect x="463.79" y="79" width="4.43" height="1" fill="#490586"/><rect x="463.78" y="80" width="4.45" height="1" fill="#400584"/><rect x="463.77" y="81" width="4.47" height="1" fill="#350582"/><rect x="463.76" y="82" width="4.48" height="1" fill="#2e0581"/><rect x="463.75" y="83" width="4.50" height="1" fill="#2b0581"/><rect x="463.74" y="84" width="4.52" height="1" fill="#450585"/><rect x="463.73" y="85" width="4.54" height="1" fill="#4a0586"/><rect x="463.72" y="86" width="4.56" height="1" fill="#260580"/><rect x="463.71" y="87" width="4.57" height="1" fill="#410584"/><rect x="463.70" y="88" width="4.59" height="1" fill="#2e0581"/><rect x="463.69" y="89" width="4.61" height="1" fill="#440585"/><rect x="463.69" y="90" width="4.63" height="1" fill="#310582"/><rect x="463.68" y="91" width="4.65" height="1" fill="#4e0587"/><rect x="463.67" y="92" width="4.66" height="1" fill="#5a0784"/><rect x="463.66" y="93" width="4.68" height="1" fill="#650980"/><rect x="463.65" y="94" width="4.70" height="1" fill="#5a0784"/><rect x="463.64" y="95" width="4.72" height="1" fill="#4d0586"/><rect x="463.63" y="96" width="4.74" height="1" fill="#590684"/><rect x="463.62" y="97" width="4.75" height="1" fill="#620881"/><rect x="463.61" y="98" width="4.77" height="1" fill="#570685"/><rect x="463.60" y="99" width="4.79" height="1" fill="#770b7a"/><rect x="463.60" y="100" width="4.80" height="1" fill="#510587"/><rect x="463.60" y="101" width="4.81" height="1" fill="#660980"/><rect x="463.59" y="102" width="4.81" height="1" fill="#5b0783"/><rect x="463.59" y="103" width="4.82" height="1" fill="#830d76"/><rect x="463.59" y="104" width="4.83" height="1" fill="#8d1172"/><rect x="463.58" y="105" width="4.83" height="1" fill="#951b6a"/><rect x="463.58" y="106" width="4.84" height="1" fill="#880e74"/><rect x="463.58" y="107" width="4.84" height="1" fill="#992166"/><rect x="463.57" y="108" width="4.85" height="1" fill="#8b0f73"/><rect x="463.57" y="109" width="4.86" height="1" fill="#90156f"/><rect x="463.57" y="110" width="4.86" height="1" fill="#7e0d78"/><rect x="463.57" y="111" width="4.87" height="1" fill="#9e2861"/><rect x="463.56" y="112" width="4.88" height="1" fill="#a63259"/><rect x="463.56" y="113" width="4.88" height="1" fill="#8e1271"/><rect x="463.56" y="114" width="4.89" height="1" fill="#8e1271"/><rect x="463.55" y="115" width="4.89" height="1" fill="#ae3d51"/><rect x="463.55" y="116" width="4.90" height="1" fill="#aa3855"/><rect x="463.55" y="117" width="4.91" height="1" fill="#a22e5d"/><rect x="463.54" y="118" width="4.91" height="1" fill="#b84b47"/><rect x="463.54" y="119" width="4.92" height="1" fill="#aa3955"/><rect x="463.54" y="120" width="4.92" height="1" fill="#9c2563"/><rect x="463.54" y="121" width="4.93" height="1" fill="#a73458"/><rect x="463.53" y="122" width="4.93" height="1" fill="#a12b5e"/><rect x="463.53" y="123" width="4.94" height="1" fill="#c2583d"/><rect x="463.53" y="124" width="4.95" height="1" fill="#c3593c"/><rect x="463.52" y="125" width="4.95" height="1" fill="#c05440"/><rect x="463.52" y="126" width="4.96" height="1" fill="#b5474a"/><rect x="463.52" y="127" width="4.96" height="1" fill="#c0553f"/><rect x="463.51" y="128" width="4.97" height="1" fill="#b84a48"/><rect x="463.51" y="129" width="4.98" height="1" fill="#b74a48"/><rect x="463.51" y="130" width="4.98" height="1" fill="#be5241"/><rect x="463.51" y="131" width="4.99" height="1" fill="#c55b3b"/><rect x="463.50" y="132" width="5.00" height="1" fill="#b84b47"/><rect x="463.50" y="133" width="5.00" height="1" fill="#da7526"/><rect x="463.50" y="134" width="5.01" height="1" fill="#cf6731"/><rect x="463.49" y="135" width="5.01" height="1" fill="#dd7823"/><rect x="463.49" y="136" width="5.02" height="1" fill="#bf5440"/><rect x="463.49" y="137" width="5.03" height="1" fill="#d46d2c"/><rect x="463.48" y="138" width="5.03" height="1" fill="#d97427"/><rect x="463.48" y="139" width="5.04" height="1" fill="#d87328"/><rect x="463.48" y="140" width="5.04" height="1" fill="#c45a3c"/><rect x="463.48" y="141" width="5.05" height="1" fill="#db7526"/><rect x="463.47" y="142" width="5.05" height="1" fill="#da7427"/><rect x="463.47" y="143" width="5.06" height="1" fill="#e88618"/><rect x="463.47" y="144" width="5.07" height="1" fill="#d97427"/><rect x="463.46" y="145" width="5.07" height="1" fill="#df7b22"/><rect x="463.46" y="146" width="5.08" height="1" fill="#d77129"/><rect x="463.46" y="147" width="5.08" height="1" fill="#de7a22"/><rect x="463.45" y="148" width="5.09" height="1" fill="#e88619"/><rect x="463.45" y="149" width="5.10" height="1" fill="#d97328"/><rect x="463.45" y="150" width="5.10" height="1" fill="#d97327"/><rect x="463.45" y="151" width="5.11" height="1" fill="#de7a22"/><rect x="463.44" y="152" width="5.12" height="1" fill="#ec8a15"/><rect x="463.44" y="153" width="5.12" height="1" fill="#ef8f12"/><rect x="463.44" y="154" width="5.13" height="1" fill="#e98718"/><rect x="463.43" y="155" width="5.13" height="1" fill="#e17d1f"/><rect x="463.43" y="156" width="5.14" height="1" fill="#f5960c"/><rect x="463.43" y="157" width="5.15" height="1" fill="#f69a0b"/><rect x="463.42" y="158" width="5.15" height="1" fill="#f3930e"/><rect x="463.42" y="159" width="5.16" height="1" fill="#f5990c"/><rect x="463.42" y="160" width="5.16" height="1" fill="#f7a40a"/><rect x="463.42" y="161" width="5.17" height="1" fill="#f69c0b"/><rect x="463.41" y="162" width="5.17" height="1" fill="#f5980c"/><rect x="463.41" y="163" width="5.18" height="1" fill="#ef8e12"/><rect x="463.41" y="164" width="5.19" height="1" fill="#ec8b15"/><rect x="463.40" y="165" width="5.19" height="1" fill="#f8aa09"/><rect x="463.40" y="166" width="5.20" height="1" fill="#ef8f12"/><rect x="463.40" y="167" width="5.21" height="1" fill="#f8ad08"/><rect x="463.39" y="168" width="5.21" height="1" fill="#f8b008"/><rect x="463.39" y="169" width="5.22" height="1" fill="#f08f11"/><rect x="463.39" y="170" width="5.22" height="1" fill="#f7a50a"/><rect x="463.39" y="171" width="5.23" height="1" fill="#f3940d"/><rect x="463.38" y="172" width="5.24" height="1" fill="#f3940e"/><rect x="463.38" y="173" width="5.24" height="1" fill="#f4950d"/><rect x="463.38" y="174" width="5.25" height="1" fill="#f69d0b"/><rect x="463.37" y="175" width="5.25" height="1" fill="#f69e0b"/><rect x="463.37" y="176" width="5.26" height="1" fill="#f69e0b"/><rect x="463.37" y="177" width="5.27" height="1" fill="#f5990b"/><rect x="463.36" y="178" width="5.27" height="1" fill="#faba06"/><rect x="463.36" y="179" width="5.28" height="1" fill="#f7a30a"/><rect x="463.36" y="180" width="5.28" height="1" fill="#fabc06"/><rect x="463.36" y="181" width="5.29" height="1" fill="#f8ad08"/><rect x="463.35" y="182" width="5.29" height="1" fill="#f69c0b"/><rect x="463.35" y="183" width="5.30" height="1" fill="#fabf05"/><rect x="463.35" y="184" width="5.31" height="1" fill="#f8b008"/><rect x="463.34" y="185" width="5.31" height="1" fill="#f7a809"/><rect x="463.34" y="186" width="5.32" height="1" fill="#fcc804"/><rect x="463.34" y="187" width="5.33" height="1" fill="#f8ae08"/><rect x="463.33" y="188" width="5.33" height="1" fill="#f7a50a"/><rect x="463.33" y="189" width="5.34" height="1" fill="#f8af08"/><rect x="463.33" y="190" width="5.34" height="1" fill="#fbc405"/><rect x="463.33" y="191" width="5.35" height="1" fill="#f8a909"/><rect x="463.32" y="192" width="5.36" height="1" fill="#f9b407"/><rect x="463.32" y="193" width="5.36" height="1" fill="#fcce03"/><rect x="463.32" y="194" width="5.37" height="1" fill="#fcca04"/><rect x="463.31" y="195" width="5.37" height="1" fill="#fcc704"/><rect x="463.31" y="196" width="5.38" height="1" fill="#fccc03"/><rect x="463.31" y="197" width="5.39" height="1" fill="#fdd502"/><rect x="463.30" y="198" width="5.39" height="1" fill="#fdd003"/><rect x="463.30" y="199" width="5.40" height="1" fill="#fdd102"/><rect x="463.29" y="200" width="5.43" height="1" fill="#fedc01"/><rect x="463.26" y="201" width="5.48" height="1" fill="#fdd502"/><rect x="463.23" y="202" width="5.54" height="1" fill="#fdd402"/><rect x="463.20" y="203" width="5.59" height="1" fill="#fcc804"/><rect x="463.18" y="204" width="5.65" height="1" fill="#fcc804"/><rect x="463.15" y="205" width="5.71" height="1" fill="#fcc804"/><rect x="463.12" y="206" width="5.76" height="1" fill="#fed702"/><rect x="463.09" y="207" width="5.82" height="1" fill="#fdd302"/><rect x="463.06" y="208" width="5.87" height="1" fill="#ffe628"/><rect x="463.04" y="209" width="5.93" height="1" fill="#ffed68"/><rect x="463.01" y="210" width="5.98" height="1" fill="#fedb01"/><rect x="462.98" y="211" width="6.04" height="1" fill="#ffe313"/><rect x="462.95" y="212" width="6.09" height="1" fill="#ffee70"/><rect x="462.93" y="213" width="6.15" height="1" fill="#ffe100"/><rect x="462.90" y="214" width="6.21" height="1" fill="#fff7be"/><rect x="462.87" y="215" width="6.26" height="1" fill="#fff07e"/><rect x="462.84" y="216" width="6.32" height="1" fill="#ffe627"/><rect x="462.81" y="217" width="6.37" height="1" fill="#ffffff"/><rect x="462.77" y="218" width="6.45" height="1" fill="#fffad1"/><rect x="462.73" y="219" width="6.55" height="1" fill="#ffffff"/><rect x="462.68" y="220" width="6.65" height="1" fill="#ffffff"/><rect x="462.62" y="221" width="6.75" height="1" fill="#ffffff"/><rect x="462.57" y="222" width="6.85" height="1" fill="#fffef6"/><rect x="462.52" y="223" width="6.95" height="1" fill="#fff7bb"/><rect x="462.48" y="224" width="7.05" height="1" fill="#ffffff"/><rect x="462.43" y="225" width="7.15" height="1" fill="#ffffff"/><rect x="462.38" y="226" width="7.25" height="1" fill="#ffffff"/><rect x="462.32" y="227" width="7.35" height="1" fill="#ffffff"/><rect x="462.27" y="228" width="7.45" height="1" fill="#ffffff"/><rect x="462.23" y="229" width="7.55" height="1" fill="#ffffff"/><rect x="462.18" y="230" width="7.65" height="1" fill="#ffffff"/><rect x="462.12" y="231" width="7.75" height="1" fill="#ffffff"/><rect x="462.07" y="232" width="7.85" height="1" fill="#ffffff"/><rect x="462.02" y="233" width="7.95" height="1" fill="#ffffff"/><rect x="462.03" y="234" width="7.94" height="1" fill="#ffffff"/><rect x="462.09" y="235" width="7.81" height="1" fill="#ffffff"/><rect x="462.16" y="236" width="7.69" height="1" fill="#ffffff"/><rect x="462.22" y="237" width="7.56" height="1" fill="#ffffff"/><rect x="462.28" y="238" width="7.44" height="1" fill="#ffffff"/><rect x="462.34" y="239" width="7.31" height="1" fill="#ffffff"/><rect x="462.41" y="240" width="7.19" height="1" fill="#ffffff"/><rect x="462.47" y="241" width="7.06" height="1" fill="#ffffff"/><rect x="462.53" y="242" width="6.94" height="1" fill="#ffffff"/><rect x="462.59" y="243" width="6.81" height="1" fill="#ffffff"/><rect x="462.66" y="244" width="6.69" height="1" fill="#ffffff"/><rect x="462.72" y="245" width="6.56" height="1" fill="#ffffff"/><rect x="462.78" y="246" width="6.44" height="1" fill="#ffffff"/><rect x="462.84" y="247" width="6.31" height="1" fill="#ffffff"/><rect x="462.91" y="248" width="6.19" height="1" fill="#ffffff"/><rect x="462.97" y="249" width="6.06" height="1" fill="#ffffff"/><rect x="463.01" y="250" width="5.97" height="1" fill="#fff49f"/><rect x="463.04" y="251" width="5.92" height="1" fill="#fff290"/><rect x="463.06" y="252" width="5.88" height="1" fill="#ffe315"/><rect x="463.09" y="253" width="5.83" height="1" fill="#ffdd01"/><rect x="463.11" y="254" width="5.78" height="1" fill="#fff187"/><rect x="463.14" y="255" width="5.73" height="1" fill="#ffe314"/><rect x="463.16" y="256" width="5.67" height="1" fill="#ffdf00"/><rect x="463.19" y="257" width="5.62" height="1" fill="#fdd302"/><rect x="463.21" y="258" width="5.58" height="1" fill="#fab906"/><rect x="463.24" y="259" width="5.53" height="1" fill="#fab906"/><rect x="463.26" y="260" width="5.48" height="1" fill="#f9b607"/><rect x="463.29" y="261" width="5.43" height="1" fill="#fbc405"/><rect x="463.30" y="262" width="5.40" height="1" fill="#fbc005"/><rect x="463.30" y="263" width="5.39" height="1" fill="#fbc105"/><rect x="463.31" y="264" width="5.39" height="1" fill="#fabf06"/><rect x="463.31" y="265" width="5.38" height="1" fill="#f8aa09"/><rect x="463.31" y="266" width="5.38" height="1" fill="#f69e0b"/><rect x="463.31" y="267" width="5.38" height="1" fill="#fabb06"/><rect x="463.31" y="268" width="5.37" height="1" fill="#f5980c"/><rect x="463.32" y="269" width="5.37" height="1" fill="#f9b407"/><rect x="463.32" y="270" width="5.36" height="1" fill="#f69c0b"/><rect x="463.32" y="271" width="5.36" height="1" fill="#f8ad08"/><rect x="463.32" y="272" width="5.35" height="1" fill="#f8af08"/><rect x="463.32" y="273" width="5.35" height="1" fill="#f9b207"/><rect x="463.33" y="274" width="5.35" height="1" fill="#f5970c"/><rect x="463.33" y="275" width="5.34" height="1" fill="#f8ab09"/><rect x="463.33" y="276" width="5.34" height="1" fill="#f9b108"/><rect x="463.33" y="277" width="5.33" height="1" fill="#f8ae08"/><rect x="463.34" y="278" width="5.33" height="1" fill="#f69f0b"/><rect x="463.34" y="279" width="5.32" height="1" fill="#f9b507"/><rect x="463.34" y="280" width="5.32" height="1" fill="#f8ab09"/><rect x="463.34" y="281" width="5.32" height="1" fill="#f7a609"/><rect x="463.34" y="282" width="5.31" height="1" fill="#f8aa09"/><rect x="463.35" y="283" width="5.31" height="1" fill="#f69d0b"/><rect x="463.35" y="284" width="5.30" height="1" fill="#f7a909"/><rect x="463.35" y="285" width="5.30" height="1" fill="#f19110"/><rect x="463.35" y="286" width="5.29" height="1" fill="#f7a40a"/><rect x="463.36" y="287" width="5.29" height="1" fill="#f7a30a"/><rect x="463.36" y="288" width="5.28" height="1" fill="#f8ae08"/><rect x="463.36" y="289" width="5.28" height="1" fill="#f6a10a"/><rect x="463.36" y="290" width="5.28" height="1" fill="#f5980c"/><rect x="463.36" y="291" width="5.27" height="1" fill="#f7a40a"/><rect x="463.37" y="292" width="5.27" height="1" fill="#f7a30a"/><rect x="463.37" y="293" width="5.26" height="1" fill="#f09011"/><rect x="463.37" y="294" width="5.26" height="1" fill="#f69c0b"/><rect x="463.37" y="295" width="5.25" height="1" fill="#ed8d13"/><rect x="463.38" y="296" width="5.25" height="1" fill="#f3940e"/><rect x="463.38" y="297" width="5.25" height="1" fill="#f5990c"/><rect x="463.38" y="298" width="5.24" height="1" fill="#e27f1e"/><rect x="463.38" y="299" width="5.24" height="1" fill="#f7a20a"/><rect x="463.38" y="300" width="5.23" height="1" fill="#e3801d"/><rect x="463.39" y="301" width="5.23" height="1" fill="#e88619"/><rect x="463.39" y="302" width="5.22" height="1" fill="#ea8817"/><rect x="463.39" y="303" width="5.22" height="1" fill="#dd7923"/><rect x="463.39" y="304" width="5.22" height="1" fill="#ef8e12"/><rect x="463.39" y="305" width="5.21" height="1" fill="#e4811c"/><rect x="463.40" y="306" width="5.21" height="1" fill="#f69c0b"/><rect x="463.40" y="307" width="5.20" height="1" fill="#ea8817"/><rect x="463.40" y="308" width="5.20" height="1" fill="#e27e1f"/><rect x="463.40" y="309" width="5.19" height="1" fill="#ea8817"/><rect x="463.41" y="310" width="5.19" height="1" fill="#ec8a15"/><rect x="463.41" y="311" width="5.18" height="1" fill="#d97427"/><rect x="463.41" y="312" width="5.18" height="1" fill="#d36c2d"/><rect x="463.41" y="313" width="5.18" height="1" fill="#da7526"/><rect x="463.41" y="314" width="5.17" height="1" fill="#e5831b"/><rect x="463.42" y="315" width="5.17" height="1" fill="#e3801e"/><rect x="463.42" y="316" width="5.16" height="1" fill="#ed8c14"/><rect x="463.42" y="317" width="5.16" height="1" fill="#d16a2e"/><rect x="463.42" y="318" width="5.15" height="1" fill="#db7626"/><rect x="463.43" y="319" width="5.15" height="1" fill="#e7841a"/><rect x="463.43" y="320" width="5.15" height="1" fill="#cf6731"/><rect x="463.43" y="321" width="5.14" height="1" fill="#d56f2b"/><rect x="463.43" y="322" width="5.14" height="1" fill="#d97427"/><rect x="463.43" y="323" width="5.13" height="1" fill="#db7625"/><rect x="463.44" y="324" width="5.13" height="1" fill="#dd7923"/><rect x="463.44" y="325" width="5.12" height="1" fill="#e6841b"/><rect x="463.44" y="326" width="5.12" height="1" fill="#c05540"/><rect x="463.44" y="327" width="5.12" height="1" fill="#dc7725"/><rect x="463.44" y="328" width="5.11" height="1" fill="#ca6135"/><rect x="463.45" y="329" width="5.11" height="1" fill="#ca6136"/><rect x="463.45" y="330" width="5.10" height="1" fill="#b94c46"/><rect x="463.45" y="331" width="5.10" height="1" fill="#bd5142"/><rect x="463.45" y="332" width="5.09" height="1" fill="#af3f50"/><rect x="463.46" y="333" width="5.09" height="1" fill="#a63359"/><rect x="463.46" y="334" width="5.08" height="1" fill="#bf5440"/><rect x="463.46" y="335" width="5.08" height="1" fill="#b5474a"/><rect x="463.46" y="336" width="5.08" height="1" fill="#9d2662"/><rect x="463.46" y="337" width="5.07" height="1" fill="#992166"/><rect x="463.47" y="338" width="5.07" height="1" fill="#a12c5e"/><rect x="463.47" y="339" width="5.06" height="1" fill="#ad3c52"/><rect x="463.47" y="340" width="5.06" height="1" fill="#9d2662"/><rect x="463.47" y="341" width="5.05" height="1" fill="#9e2861"/><rect x="463.48" y="342" width="5.05" height="1" fill="#9a2265"/><rect x="463.48" y="343" width="5.05" height="1" fill="#a83657"/><rect x="463.48" y="344" width="5.04" height="1" fill="#9f2960"/><rect x="463.48" y="345" width="5.04" height="1" fill="#8c1073"/><rect x="463.48" y="346" width="5.03" height="1" fill="#850e75"/><rect x="463.49" y="347" width="5.03" height="1" fill="#961d69"/><rect x="463.49" y="348" width="5.02" height="1" fill="#9a2265"/><rect x="463.49" y="349" width="5.02" height="1" fill="#7d0d78"/><rect x="463.49" y="350" width="5.02" height="1" fill="#840e76"/><rect x="463.49" y="351" width="5.01" height="1" fill="#94196b"/><rect x="463.50" y="352" width="5.01" height="1" fill="#8a0f74"/><rect x="463.50" y="353" width="5.00" height="1" fill="#7b0c79"/><rect x="463.50" y="354" width="5.00" height="1" fill="#830d76"/><rect x="463.50" y="355" width="4.99" height="1" fill="#7e0d78"/><rect x="463.51" y="356" width="4.99" height="1" fill="#971e68"/><rect x="463.51" y="357" width="4.98" height="1" fill="#880e74"/><rect x="463.51" y="358" width="4.98" height="1" fill="#67097f"/><rect x="463.51" y="359" width="4.98" height="1" fill="#6f0a7d"/><rect x="463.51" y="360" width="4.97" height="1" fill="#7f0d77"/><rect x="463.52" y="361" width="4.97" height="1" fill="#590784"/><rect x="463.52" y="362" width="4.96" height="1" fill="#5b0783"/><rect x="463.52" y="363" width="4.96" height="1" fill="#840e76"/><rect x="463.52" y="364" width="4.95" height="1" fill="#90156f"/><rect x="463.52" y="365" width="4.95" height="1" fill="#880e74"/><rect x="463.53" y="366" width="4.95" height="1" fill="#5c0783"/><rect x="463.53" y="367" width="4.94" height="1" fill="#730b7b"/><rect x="463.53" y="368" width="4.94" height="1" fill="#840e76"/><rect x="463.53" y="369" width="4.93" height="1" fill="#5f0782"/><rect x="463.54" y="370" width="4.93" height="1" fill="#620881"/><rect x="463.54" y="371" width="4.92" height="1" fill="#6e0a7d"/><rect x="463.54" y="372" width="4.92" height="1" fill="#5d0783"/><rect x="463.54" y="373" width="4.92" height="1" fill="#5a0784"/><rect x="463.54" y="374" width="4.91" height="1" fill="#7c0c78"/><rect x="463.55" y="375" width="4.91" height="1" fill="#69097f"/><rect x="463.55" y="376" width="4.90" height="1" fill="#830d76"/><rect x="463.55" y="377" width="4.90" height="1" fill="#750b7b"/><rect x="463.55" y="378" width="4.89" height="1" fill="#8a0f74"/><rect x="463.56" y="379" width="4.89" height="1" fill="#640880"/><rect x="463.56" y="380" width="4.88" height="1" fill="#67097f"/><rect x="463.56" y="381" width="4.88" height="1" fill="#620881"/><rect x="463.56" y="382" width="4.88" height="1" fill="#550685"/><rect x="463.56" y="383" width="4.87" height="1" fill="#630881"/><rect x="463.57" y="384" width="4.87" height="1" fill="#67097f"/><rect x="463.57" y="385" width="4.86" height="1" fill="#6f0a7d"/><rect x="463.57" y="386" width="4.86" height="1" fill="#650980"/><rect x="463.57" y="387" width="4.85" height="1" fill="#8c0f73"/><rect x="463.57" y="388" width="4.85" height="1" fill="#850e75"/><rect x="463.58" y="389" width="4.85" height="1" fill="#650880"/><rect x="463.58" y="390" width="4.84" height="1" fill="#5c0783"/><rect x="463.58" y="391" width="4.84" height="1" fill="#6d0a7d"/><rect x="463.58" y="392" width="4.83" height="1" fill="#560685"/><rect x="463.59" y="393" width="4.83" height="1" fill="#5b0783"/><rect x="463.59" y="394" width="4.82" height="1" fill="#7a0c79"/><rect x="463.59" y="395" width="4.82" height="1" fill="#560685"/><rect x="463.59" y="396" width="4.82" height="1" fill="#890e74"/><rect x="463.59" y="397" width="4.81" height="1" fill="#530686"/><rect x="463.60" y="398" width="4.81" height="1" fill="#890f74"/><rect x="463.60" y="399" width="4.80" height="1" fill="#650980"/><rect x="463.60" y="400" width="4.80" height="1" fill="#6e0a7d"/><rect x="463.60" y="401" width="4.79" height="1" fill="#650980"/><rect x="463.61" y="402" width="4.79" height="1" fill="#6f0a7d"/><rect x="463.61" y="403" width="4.78" height="1" fill="#640880"/><rect x="463.61" y="404" width="4.78" height="1" fill="#520586"/><rect x="463.61" y="405" width="4.77" height="1" fill="#4f0587"/><rect x="463.62" y="406" width="4.77" height="1" fill="#7d0c78"/><rect x="463.62" y="407" width="4.76" height="1" fill="#68097f"/><rect x="463.62" y="408" width="4.76" height="1" fill="#790c79"/><rect x="463.62" y="409" width="4.76" height="1" fill="#4e0587"/><rect x="463.62" y="410" width="4.75" height="1" fill="#68097f"/><rect x="463.63" y="411" width="4.75" height="1" fill="#6a097e"/><rect x="463.63" y="412" width="4.74" height="1" fill="#600882"/><rect x="463.63" y="413" width="4.74" height="1" fill="#520586"/><rect x="463.63" y="414" width="4.73" height="1" fill="#710b7c"/><rect x="463.64" y="415" width="4.73" height="1" fill="#720b7c"/><rect x="463.64" y="416" width="4.72" height="1" fill="#7d0d78"/><rect x="463.64" y="417" width="4.72" height="1" fill="#4e0587"/><rect x="463.64" y="418" width="4.71" height="1" fill="#4b0586"/><rect x="463.65" y="419" width="4.71" height="1" fill="#6e0a7d"/><rect x="463.65" y="420" width="4.70" height="1" fill="#6d0a7d"/><rect x="463.65" y="421" width="4.70" height="1" fill="#520586"/><rect x="463.65" y="422" width="4.69" height="1" fill="#6f0a7d"/><rect x="463.66" y="423" width="4.69" height="1" fill="#7b0c79"/><rect x="463.66" y="424" width="4.68" height="1" fill="#600882"/><rect x="463.66" y="425" width="4.68" height="1" fill="#4d0586"/><rect x="463.66" y="426" width="4.67" height="1" fill="#7e0d78"/><rect x="463.66" y="427" width="4.67" height="1" fill="#480586"/><rect x="463.67" y="428" width="4.67" height="1" fill="#7a0c79"/><rect x="463.67" y="429" width="4.66" height="1" fill="#4e0587"/><rect x="463.67" y="430" width="4.66" height="1" fill="#580684"/><rect x="463.67" y="431" width="4.65" height="1" fill="#700a7c"/><rect x="463.68" y="432" width="4.65" height="1" fill="#790c79"/><rect x="463.68" y="433" width="4.64" height="1" fill="#500587"/><rect x="463.68" y="434" width="4.64" height="1" fill="#480586"/><rect x="463.68" y="435" width="4.63" height="1" fill="#470585"/><rect x="463.69" y="436" width="4.63" height="1" fill="#660980"/><rect x="463.69" y="437" width="4.62" height="1" fill="#67097f"/><rect x="463.69" y="438" width="4.62" height="1" fill="#7b0c79"/><rect x="463.69" y="439" width="4.61" height="1" fill="#620881"/><rect x="463.70" y="440" width="4.61" height="1" fill="#630881"/><rect x="463.70" y="441" width="4.60" height="1" fill="#750b7b"/><rect x="463.70" y="442" width="4.60" height="1" fill="#720b7c"/><rect x="463.70" y="443" width="4.59" height="1" fill="#5c0783"/><rect x="463.70" y="444" width="4.59" height="1" fill="#6d0a7d"/><rect x="463.71" y="445" width="4.59" height="1" fill="#5b0783"/><rect x="463.71" y="446" width="4.58" height="1" fill="#480586"/><rect x="463.71" y="447" width="4.58" height="1" fill="#6b097e"/><rect x="463.71" y="448" width="4.57" height="1" fill="#660980"/><rect x="463.72" y="449" width="4.57" height="1" fill="#7d0d78"/><rect x="463.72" y="450" width="4.56" height="1" fill="#69097f"/><rect x="463.72" y="451" width="4.56" height="1" fill="#4b0586"/><rect x="463.72" y="452" width="4.55" height="1" fill="#6f0a7d"/><rect x="463.73" y="453" width="4.55" height="1" fill="#620881"/><rect x="463.73" y="454" width="4.54" height="1" fill="#470585"/><rect x="463.73" y="455" width="4.54" height="1" fill="#5d0783"/><rect x="463.73" y="456" width="4.53" height="1" fill="#760b7a"/><rect x="463.74" y="457" width="4.53" height="1" fill="#660980"/><rect x="463.74" y="458" width="4.52" height="1" fill="#5a0784"/><rect x="463.74" y="459" width="4.52" height="1" fill="#430585"/><rect x="463.74" y="460" width="4.51" height="1" fill="#68097f"/><rect x="463.75" y="461" width="4.51" height="1" fill="#7b0c79"/><rect x="463.75" y="462" width="4.51" height="1" fill="#730b7b"/><rect x="463.75" y="463" width="4.50" height="1" fill="#4d0586"/><rect x="463.75" y="464" width="4.50" height="1" fill="#480586"/><rect x="463.75" y="465" width="4.49" height="1" fill="#5b0783"/><rect x="463.76" y="466" width="4.49" height="1" fill="#4f0587"/><rect x="463.76" y="467" width="4.48" height="1" fill="#610881"/><rect x="463.76" y="468" width="4.48" height="1" fill="#590784"/><rect x="463.76" y="469" width="4.47" height="1" fill="#6b097e"/><rect x="463.77" y="470" width="4.47" height="1" fill="#750b7b"/><rect x="463.77" y="471" width="4.46" height="1" fill="#540686"/><rect x="463.77" y="472" width="4.46" height="1" fill="#6a097e"/><rect x="463.77" y="473" width="4.45" height="1" fill="#67097f"/><rect x="463.78" y="474" width="4.45" height="1" fill="#470585"/><rect x="463.78" y="475" width="4.44" height="1" fill="#6a097e"/><rect x="463.78" y="476" width="4.44" height="1" fill="#4e0587"/><rect x="463.78" y="477" width="4.43" height="1" fill="#5e0782"/><rect x="463.79" y="478" width="4.43" height="1" fill="#5a0784"/><rect x="463.79" y="479" width="4.42" height="1" fill="#640880"/><rect x="463.79" y="480" width="4.42" height="1" fill="#710b7c"/><rect x="463.79" y="481" width="4.42" height="1" fill="#730b7b"/><rect x="463.79" y="482" width="4.41" height="1" fill="#410584"/><rect x="463.80" y="483" width="4.41" height="1" fill="#400584"/><rect x="463.80" y="484" width="4.40" height="1" fill="#410584"/><rect x="463.80" y="485" width="4.40" height="1" fill="#700a7c"/><rect x="463.80" y="486" width="4.39" height="1" fill="#640880"/><rect x="463.81" y="487" width="4.39" height="1" fill="#600882"/><rect x="463.81" y="488" width="4.38" height="1" fill="#520586"/><rect x="463.81" y="489" width="4.38" height="1" fill="#4d0587"/><rect x="463.81" y="490" width="4.37" height="1" fill="#5e0782"/><rect x="463.82" y="491" width="4.37" height="1" fill="#730b7b"/><rect x="463.82" y="492" width="4.36" height="1" fill="#6c0a7e"/><rect x="463.82" y="493" width="4.36" height="1" fill="#5e0782"/><rect x="463.82" y="494" width="4.35" height="1" fill="#4d0586"/><rect x="463.83" y="495" width="4.35" height="1" fill="#720b7c"/><rect x="463.83" y="496" width="4.34" height="1" fill="#650880"/><rect x="463.83" y="497" width="4.34" height="1" fill="#550685"/><rect x="463.83" y="498" width="4.34" height="1" fill="#440585"/><rect x="463.83" y="499" width="4.33" height="1" fill="#720b7c"/><rect x="463.84" y="500" width="4.33" height="1" fill="#410584"/><rect x="463.84" y="501" width="4.32" height="1" fill="#710b7c"/><rect x="463.84" y="502" width="4.32" height="1" fill="#430585"/><rect x="463.84" y="503" width="4.31" height="1" fill="#68097f"/><rect x="463.85" y="504" width="4.31" height="1" fill="#540686"/><rect x="463.85" y="505" width="4.30" height="1" fill="#660980"/><rect x="463.85" y="506" width="4.30" height="1" fill="#520586"/><rect x="463.85" y="507" width="4.29" height="1" fill="#480586"/><rect x="463.86" y="508" width="4.29" height="1" fill="#640880"/><rect x="463.86" y="509" width="4.28" height="1" fill="#4b0586"/><rect x="463.86" y="510" width="4.28" height="1" fill="#480586"/><rect x="463.86" y="511" width="4.27" height="1" fill="#590784"/><rect x="463.87" y="512" width="4.27" height="1" fill="#590784"/><rect x="463.87" y="513" width="4.26" height="1" fill="#600882"/><rect x="463.87" y="514" width="4.26" height="1" fill="#530586"/><rect x="463.87" y="515" width="4.26" height="1" fill="#610881"/><rect x="463.87" y="516" width="4.25" height="1" fill="#570685"/><rect x="463.88" y="517" width="4.25" height="1" fill="#2f0581"/><rect x="463.88" y="518" width="4.24" height="1" fill="#350582"/><rect x="463.88" y="519" width="4.24" height="1" fill="#580684"/><rect x="463.88" y="520" width="4.23" height="1" fill="#490586"/><rect x="463.89" y="521" width="4.23" height="1" fill="#5d0783"/><rect x="463.89" y="522" width="4.22" height="1" fill="#340582"/><rect x="463.89" y="523" width="4.22" height="1" fill="#3a0583"/><rect x="463.89" y="524" width="4.21" height="1" fill="#380583"/><rect x="463.90" y="525" width="4.21" height="1" fill="#4b0586"/><rect x="463.90" y="526" width="4.20" height="1" fill="#2d0581"/><rect x="463.90" y="527" width="4.20" height="1" fill="#370583"/><rect x="463.90" y="528" width="4.19" height="1" fill="#420585"/><rect x="463.91" y="529" width="4.19" height="1" fill="#2d0581"/><rect x="463.91" y="530" width="4.18" height="1" fill="#1e057e"/><rect x="463.91" y="531" width="4.18" height="1" fill="#13057c"/><rect x="463.91" y="532" width="4.17" height="1" fill="#500587"/><rect x="463.91" y="533" width="4.17" height="1" fill="#410584"/><rect x="463.92" y="534" width="4.17" height="1" fill="#410584"/><rect x="463.92" y="535" width="4.16" height="1" fill="#16057d"/><rect x="463.92" y="536" width="4.16" height="1" fill="#08057b"/><rect x="463.92" y="537" width="4.15" height="1" fill="#430585"/><rect x="463.93" y="538" width="4.15" height="1" fill="#4a0586"/><rect x="463.93" y="539" width="4.14" height="1" fill="#050577"/><rect x="463.93" y="540" width="4.14" height="1" fill="#440585"/><rect x="463.93" y="541" width="4.13" height="1" fill="#340582"/><rect x="463.94" y="542" width="4.13" height="1" fill="#1d057e"/><rect x="463.94" y="543" width="4.12" height="1" fill="#2e0581"/><rect x="463.94" y="544" width="4.12" height="1" fill="#16057d"/><rect x="463.94" y="545" width="4.11" height="1" fill="#17057d"/><rect x="463.95" y="546" width="4.11" height="1" fill="#17057d"/><rect x="463.95" y="547" width="4.10" height="1" fill="#11057c"/><rect x="463.95" y="548" width="4.10" height="1" fill="#08057b"/><rect x="463.95" y="549" width="4.09" height="1" fill="#280580"/><rect x="463.95" y="550" width="4.09" height="1" fill="#22057f"/><rect x="463.96" y="551" width="4.09" height="1" fill="#370583"/><rect x="463.96" y="552" width="4.08" height="1" fill="#050573"/><rect x="463.96" y="553" width="4.08" height="1" fill="#04045b"/><rect x="463.96" y="554" width="4.07" height="1" fill="#050579"/><rect x="463.97" y="555" width="4.07" height="1" fill="#1d057e"/><rect x="463.97" y="556" width="4.06" height="1" fill="#2e0581"/><rect x="463.97" y="557" width="4.06" height="1" fill="#12057c"/><rect x="463.97" y="558" width="4.05" height="1" fill="#030352"/><rect x="463.98" y="559" width="4.05" height="1" fill="#050574"/><rect x="463.98" y="560" width="4.04" height="1" fill="#0b057b"/><rect x="463.98" y="561" width="4.04" height="1" fill="#0a057b"/><rect x="463.98" y="562" width="4.03" height="1" fill="#04046e"/><rect x="463.99" y="563" width="4.03" height="1" fill="#030353"/><rect x="463.99" y="564" width="4.02" height="1" fill="#050570"/><rect x="463.99" y="565" width="4.02" height="1" fill="#06057a"/><rect x="463.99" y="566" width="4.01" height="1" fill="#040462"/><rect x="464.00" y="567" width="4.01" height="1" fill="#1e057e"/><rect x="464.00" y="568" width="4.01" height="1" fill="#040466"/><rect x="464.00" y="569" width="4.00" height="1" fill="#050576"/><rect x="464.00" y="570" width="4.00" height="1" fill="#040459"/><rect x="464.00" y="571" width="3.99" height="1" fill="#040459"/><rect x="464.01" y="572" width="3.99" height="1" fill="#03034d"/><rect x="464.01" y="573" width="3.98" height="1" fill="#16057d"/><rect x="464.01" y="574" width="3.98" height="1" fill="#04045d"/><rect x="464.01" y="575" width="3.97" height="1" fill="#050577"/><rect x="464.02" y="576" width="3.97" height="1" fill="#040462"/><rect x="464.02" y="577" width="3.96" height="1" fill="#11057c"/><rect x="464.02" y="578" width="3.96" height="1" fill="#17057d"/><rect x="464.02" y="579" width="3.95" height="1" fill="#030355"/><rect x="464.03" y="580" width="3.95" height="1" fill="#1a057e"/><rect x="464.03" y="581" width="3.94" height="1" fill="#04046a"/><rect x="464.03" y="582" width="3.94" height="1" fill="#14057d"/><rect x="464.03" y="583" width="3.93" height="1" fill="#04045d"/><rect x="464.04" y="584" width="3.93" height="1" fill="#040464"/><rect x="464.04" y="585" width="3.92" height="1" fill="#030340"/><rect x="464.04" y="586" width="3.92" height="1" fill="#030355"/><rect x="464.04" y="587" width="3.92" height="1" fill="#02023a"/><rect x="464.04" y="588" width="3.91" height="1" fill="#030350"/><rect x="464.05" y="589" width="3.91" height="1" fill="#04046d"/><rect x="464.05" y="590" width="3.90" height="1" fill="#02023d"/><rect x="464.05" y="591" width="3.90" height="1" fill="#030346"/><rect x="464.05" y="592" width="3.89" height="1" fill="#0c057b"/><rect x="464.06" y="593" width="3.89" height="1" fill="#040465"/><rect x="464.06" y="594" width="3.88" height="1" fill="#040466"/><rect x="464.06" y="595" width="3.88" height="1" fill="#030343"/><rect x="464.06" y="596" width="3.87" height="1" fill="#0e057b"/><rect x="464.07" y="597" width="3.87" height="1" fill="#030348"/><rect x="464.07" y="598" width="3.86" height="1" fill="#020236"/><rect x="464.07" y="599" width="3.86" height="1" fill="#030355"/><rect x="464.07" y="600" width="3.85" height="1" fill="#04045e"/><rect x="464.08" y="601" width="3.85" height="1" fill="#030357"/><rect x="464.08" y="602" width="3.84" height="1" fill="#010123"/><rect x="464.08" y="603" width="3.84" height="1" fill="#04045c"/><rect x="464.08" y="604" width="3.84" height="1" fill="#010125"/><rect x="464.08" y="605" width="3.83" height="1" fill="#040459"/><rect x="464.09" y="606" width="3.83" height="1" fill="#010118"/><rect x="464.09" y="607" width="3.82" height="1" fill="#000005"/><rect x="464.09" y="608" width="3.82" height="1" fill="#000005"/><rect x="464.09" y="609" width="3.81" height="1" fill="#000006"/><rect x="464.10" y="610" width="3.81" height="1" fill="#010115"/><rect x="464.10" y="611" width="3.80" height="1" fill="#000006"/></g><g filter="url(#bl2)" shape-rendering="auto"><rect x="732.69" y="178" width="3.01" height="1" fill="#04046d"/><rect x="732.68" y="179" width="3.04" height="1" fill="#05057a"/><rect x="732.67" y="180" width="3.07" height="1" fill="#09057b"/><rect x="732.65" y="181" width="3.09" height="1" fill="#050573"/><rect x="732.64" y="182" width="3.12" height="1" fill="#1d057e"/><rect x="732.63" y="183" width="3.15" height="1" fill="#13057c"/><rect x="732.61" y="184" width="3.17" height="1" fill="#040459"/><rect x="732.60" y="185" width="3.20" height="1" fill="#050577"/><rect x="732.59" y="186" width="3.23" height="1" fill="#050577"/><rect x="732.57" y="187" width="3.25" height="1" fill="#050572"/><rect x="732.56" y="188" width="3.28" height="1" fill="#4a0586"/><rect x="732.55" y="189" width="3.31" height="1" fill="#2f0581"/><rect x="732.53" y="190" width="3.33" height="1" fill="#290580"/><rect x="732.52" y="191" width="3.36" height="1" fill="#540686"/><rect x="732.51" y="192" width="3.39" height="1" fill="#440585"/><rect x="732.49" y="193" width="3.41" height="1" fill="#480586"/><rect x="732.48" y="194" width="3.44" height="1" fill="#710a7c"/><rect x="732.47" y="195" width="3.47" height="1" fill="#5c0783"/><rect x="732.45" y="196" width="3.49" height="1" fill="#93196c"/><rect x="732.44" y="197" width="3.52" height="1" fill="#9b2464"/><rect x="732.43" y="198" width="3.55" height="1" fill="#7c0c78"/><rect x="732.41" y="199" width="3.57" height="1" fill="#9d2662"/><rect x="732.40" y="200" width="3.60" height="1" fill="#8f1470"/><rect x="732.39" y="201" width="3.63" height="1" fill="#b5484a"/><rect x="732.37" y="202" width="3.65" height="1" fill="#a12c5e"/><rect x="732.36" y="203" width="3.68" height="1" fill="#af4050"/><rect x="732.35" y="204" width="3.71" height="1" fill="#bd5142"/><rect x="732.33" y="205" width="3.73" height="1" fill="#c3583d"/><rect x="732.32" y="206" width="3.76" height="1" fill="#bd5143"/><rect x="732.31" y="207" width="3.79" height="1" fill="#b3444c"/><rect x="732.30" y="208" width="3.79" height="1" fill="#ba4d45"/><rect x="732.31" y="209" width="3.77" height="1" fill="#a73458"/><rect x="732.32" y="210" width="3.76" height="1" fill="#a63359"/><rect x="732.33" y="211" width="3.74" height="1" fill="#b4454b"/><rect x="732.34" y="212" width="3.72" height="1" fill="#a63359"/><rect x="732.35" y="213" width="3.70" height="1" fill="#992266"/><rect x="732.36" y="214" width="3.68" height="1" fill="#9a2265"/><rect x="732.37" y="215" width="3.67" height="1" fill="#8c0f73"/><rect x="732.38" y="216" width="3.65" height="1" fill="#7b0c79"/><rect x="732.38" y="217" width="3.63" height="1" fill="#730b7b"/><rect x="732.39" y="218" width="3.61" height="1" fill="#68097f"/><rect x="732.40" y="219" width="3.60" height="1" fill="#5f0882"/><rect x="732.41" y="220" width="3.58" height="1" fill="#590784"/><rect x="732.42" y="221" width="3.56" height="1" fill="#660980"/><rect x="732.43" y="222" width="3.54" height="1" fill="#630881"/><rect x="732.44" y="223" width="3.52" height="1" fill="#580684"/><rect x="732.45" y="224" width="3.51" height="1" fill="#380583"/><rect x="732.46" y="225" width="3.49" height="1" fill="#530586"/><rect x="732.46" y="226" width="3.47" height="1" fill="#460585"/><rect x="732.47" y="227" width="3.45" height="1" fill="#0f057c"/><rect x="732.48" y="228" width="3.44" height="1" fill="#430585"/><rect x="732.49" y="229" width="3.42" height="1" fill="#050577"/><rect x="732.50" y="230" width="3.40" height="1" fill="#2c0581"/><rect x="732.51" y="231" width="3.38" height="1" fill="#15057d"/><rect x="732.52" y="232" width="3.36" height="1" fill="#300582"/><rect x="732.53" y="233" width="3.35" height="1" fill="#300581"/><rect x="732.54" y="234" width="3.33" height="1" fill="#3b0583"/><rect x="732.54" y="235" width="3.31" height="1" fill="#360582"/><rect x="732.55" y="236" width="3.29" height="1" fill="#07057a"/><rect x="732.56" y="237" width="3.28" height="1" fill="#040457"/><rect x="732.57" y="238" width="3.26" height="1" fill="#040459"/><rect x="732.58" y="239" width="3.24" height="1" fill="#2e0581"/><rect x="732.59" y="240" width="3.22" height="1" fill="#040468"/><rect x="732.60" y="241" width="3.20" height="1" fill="#04045b"/><rect x="732.61" y="242" width="3.19" height="1" fill="#03034b"/><rect x="732.62" y="243" width="3.17" height="1" fill="#04045d"/><rect x="732.62" y="244" width="3.15" height="1" fill="#030354"/><rect x="732.63" y="245" width="3.13" height="1" fill="#050574"/><rect x="732.64" y="246" width="3.12" height="1" fill="#02023c"/><rect x="732.65" y="247" width="3.10" height="1" fill="#030350"/><rect x="732.66" y="248" width="3.08" height="1" fill="#050573"/><rect x="732.67" y="249" width="3.06" height="1" fill="#030344"/><rect x="732.68" y="250" width="3.04" height="1" fill="#010125"/><rect x="732.69" y="251" width="3.03" height="1" fill="#020238"/><rect x="732.70" y="252" width="3.01" height="1" fill="#010123"/></g><g filter="url(#bl2)" shape-rendering="auto"><rect x="783.98" y="205" width="3.04" height="1" fill="#04045b"/><rect x="783.94" y="206" width="3.12" height="1" fill="#2b0581"/><rect x="783.90" y="207" width="3.21" height="1" fill="#330582"/><rect x="783.85" y="208" width="3.29" height="1" fill="#650880"/><rect x="783.81" y="209" width="3.38" height="1" fill="#5c0783"/><rect x="783.77" y="210" width="3.46" height="1" fill="#6a097e"/><rect x="783.73" y="211" width="3.54" height="1" fill="#92176d"/><rect x="783.69" y="212" width="3.62" height="1" fill="#a02b5f"/><rect x="783.65" y="213" width="3.71" height="1" fill="#a22d5d"/><rect x="783.60" y="214" width="3.79" height="1" fill="#bd5142"/><rect x="783.56" y="215" width="3.88" height="1" fill="#d06930"/><rect x="783.52" y="216" width="3.96" height="1" fill="#e4821c"/><rect x="783.52" y="217" width="3.95" height="1" fill="#e17e1f"/><rect x="783.58" y="218" width="3.85" height="1" fill="#b4464b"/><rect x="783.62" y="219" width="3.75" height="1" fill="#a12b5e"/><rect x="783.67" y="220" width="3.65" height="1" fill="#520586"/><rect x="783.73" y="221" width="3.55" height="1" fill="#490586"/></g><g filter="url(#bl2)" shape-rendering="auto"><rect x="279.28" y="202" width="3.05" height="1" fill="#0c057b"/><rect x="279.23" y="203" width="3.15" height="1" fill="#04046b"/><rect x="279.18" y="204" width="3.25" height="1" fill="#050576"/><rect x="279.12" y="205" width="3.35" height="1" fill="#17057d"/><rect x="279.07" y="206" width="3.45" height="1" fill="#3a0583"/><rect x="279.07" y="207" width="3.45" height="1" fill="#420585"/><rect x="279.12" y="208" width="3.35" height="1" fill="#250580"/><rect x="279.18" y="209" width="3.25" height="1" fill="#04046d"/><rect x="279.23" y="210" width="3.15" height="1" fill="#18057d"/><rect x="279.28" y="211" width="3.05" height="1" fill="#0c057b"/></g><g filter="url(#bl2)" shape-rendering="auto"><rect x="378.07" y="200" width="3.07" height="1" fill="#04045e"/><rect x="378.00" y="201" width="3.20" height="1" fill="#380583"/><rect x="377.93" y="202" width="3.33" height="1" fill="#510587"/><rect x="377.87" y="203" width="3.47" height="1" fill="#7e0d78"/><rect x="377.80" y="204" width="3.60" height="1" fill="#9d2662"/><rect x="377.73" y="205" width="3.73" height="1" fill="#a5315a"/><rect x="377.73" y="206" width="3.74" height="1" fill="#ac3b53"/><rect x="377.79" y="207" width="3.63" height="1" fill="#ad3c52"/><rect x="377.84" y="208" width="3.51" height="1" fill="#830d76"/><rect x="377.90" y="209" width="3.40" height="1" fill="#630881"/><rect x="377.96" y="210" width="3.29" height="1" fill="#310582"/><rect x="378.01" y="211" width="3.17" height="1" fill="#1e057e"/><rect x="378.07" y="212" width="3.06" height="1" fill="#040467"/></g><rect x="110" y="760" width="1" height="20" fill="#fff"/><text transform="translate(107.2,778.5) rotate(-90)" font-family="Liberation Sans" font-size="11" fill="#fff" shape-rendering="auto">2025-11-06 21:28:20</text><rect x="220" y="760" width="1" height="20" fill="#fff"/><text transform="translate(217.0,778.5) rotate(-90)" font-family="Liberation Sans" font-size="11" fill="#fff" shape-rendering="auto">2025-11-06 21:28:30</text><rect x="332" y="760" width="1" height="20" fill="#fff"/><text transform="translate(329.3,778.5) rotate(-90)" font-family="Liberation Sans" font-size="11" fill="#fff" shape-rendering="auto">2025-11-06 21:28:40</text><rect x="447" y="760" width="1" height="20" fill="#fff"/><text transform="translate(444.1,778.5) rotate(-90)" font-family="Liberation Sans" font-size="11" fill="#fff" shape-rendering="auto">2025-11-06 21:28:50</text><rect x="562" y="760" width="1" height="20" fill="#fff"/><text transform="translate(559.1,778.5) rotate(-90)" font-family="Liberation Sans" font-size="11" fill="#fff" shape-rendering="auto">2025-11-06 21:29:00</text><rect x="670" y="760" width="1" height="20" fill="#fff"/><text transform="translate(667.0,778.5) rotate(-90)" font-family="Liberation Sans" font-size="11" fill="#fff" shape-rendering="auto">2025-11-06 21:29:10</text><rect x="785" y="760" width="1" height="20" fill="#fff"/><text transform="translate(782.0,778.5) rotate(-90)" font-family="Liberation Sans" font-size="11" fill="#fff" shape-rendering="auto">2025-11-06 21:29:20</text><rect x="818" y="1" width="42" height="781" fill="#fff"/><path fill="#000" d="M818 3h8v1h-8zM818 11h8v1h-8zM818 19h11v1h-11zM818 26h8v1h-8zM818 34h8v1h-8zM818 42h8v1h-8zM818 50h8v1h-8zM818 57h8v1h-8zM818 65h8v1h-8zM818 73h8v1h-8zM818 81h8v1h-8zM818 89h8v1h-8zM818 97h26v1h-26zM818 104h8v1h-8zM818 112h8v1h-8zM818 120h8v1h-8zM818 128h8v1h-8zM818 136h8v1h-8zM818 143h8v1h-8zM818 151h8v1h-8zM818 159h8v1h-8zM818 167h8v1h-8zM818 175h11v1h-11zM818 182h8v1h-8zM818 190h8v1h-8zM818 198h8v1h-8zM818 206h8v1h-8zM818 214h8v1h-8zM818 221h8v1h-8zM818 229h8v1h-8zM818 237h8v1h-8zM818 245h8v1h-8zM818 253h26v1h-26zM818 260h8v1h-8zM818 268h8v1h-8zM818 276h8v1h-8zM818 284h8v1h-8zM818 292h8v1h-8zM818 300h8v1h-8zM818 307h8v1h-8zM818 315h8v1h-8zM818 323h8v1h-8zM818 331h11v1h-11zM818 339h8v1h-8zM818 346h8v1h-8zM818 354h8v1h-8zM818 362h8v1h-8zM818 370h8v1h-8zM818 378h8v1h-8zM818 385h8v1h-8zM818 393h8v1h-8zM818 401h8v1h-8zM818 409h26v1h-26zM818 417h8v1h-8zM818 425h8v1h-8zM818 432h8v1h-8zM818 440h8v1h-8zM818 448h8v1h-8zM818 456h8v1h-8zM818 464h8v1h-8zM818 471h8v1h-8zM818 479h8v1h-8zM818 487h11v1h-11zM818 495h8v1h-8zM818 503h8v1h-8zM818 510h8v1h-8zM818 518h8v1h-8zM818 526h8v1h-8zM818 534h8v1h-8zM818 542h8v1h-8zM818 549h8v1h-8zM818 557h8v1h-8zM818 565h26v1h-26zM818 573h8v1h-8zM818 581h8v1h-8zM818 589h8v1h-8zM818 596h8v1h-8zM818 604h8v1h-8zM818 612h8v1h-8zM818 620h8v1h-8zM818 628h8v1h-8zM818 635h8v1h-8zM818 643h11v1h-11zM818 651h8v1h-8zM818 659h8v1h-8zM818 667h8v1h-8zM818 674h8v1h-8zM818 682h8v1h-8zM818 690h8v1h-8zM818 698h8v1h-8zM818 706h8v1h-8zM818 713h8v1h-8zM818 721h26v1h-26zM818 729h8v1h-8zM818 737h8v1h-8zM818 745h8v1h-8zM818 753h8v1h-8zM818 760h8v1h-8zM818 768h8v1h-8zM818 776h8v1h-8z"/><polyline points="823.5,9.5 839.5,17.5 839.5,773.5 825.5,781.5" fill="none" stroke="#1c1c96" stroke-width="1" shape-rendering="auto"/><text transform="translate(848.5,97.3) rotate(90)" text-anchor="middle" font-family="Liberation Mono" font-size="11.5" fill="#4a4a4a" shape-rendering="auto">143050400</text><text transform="translate(848.5,253.3) rotate(90)" text-anchor="middle" font-family="Liberation Mono" font-size="11.5" fill="#4a4a4a" shape-rendering="auto">143050200</text><text transform="translate(848.5,409.3) rotate(90)" text-anchor="middle" font-family="Liberation Mono" font-size="11.5" fill="#4a4a4a" shape-rendering="auto">143050000</text><text transform="translate(848.5,565.3) rotate(90)" text-anchor="middle" font-family="Liberation Mono" font-size="11.5" fill="#4a4a4a" shape-rendering="auto">143049800</text><text transform="translate(848.5,721.3) rotate(90)" text-anchor="middle" font-family="Liberation Mono" font-size="11.5" fill="#4a4a4a" shape-rendering="auto">143049600 Hz</text><g clip-path="url(#pnc)"><rect x="860" y="1" width="80" height="781" fill="#535353"/><rect x="860" y="1" width="80" height="12" fill="#000"/><rect x="860" y="778" width="80" height="4" fill="#000"/><path fill="#030306" d="M860 14h5v1h-5zM860 15h5v1h-5zM860 16h2v1h-2zM860 17h3v1h-3zM860 18h12v1h-12zM860 19h11v1h-11zM860 20h4v1h-4zM860 21h3v1h-3zM860 22h3v1h-3zM860 23h10v1h-10zM860 24h6v1h-6zM860 27h1v1h-1zM860 28h7v1h-7zM860 29h10v1h-10zM860 30h11v1h-11zM860 31h7v1h-7zM860 32h3v1h-3zM860 34h17v1h-17zM860 35h15v1h-15zM860 36h5v1h-5zM860 37h8v1h-8zM860 38h15v1h-15zM860 39h12v1h-12zM860 40h11v1h-11zM860 41h7v1h-7zM860 42h19v1h-19zM860 43h19v1h-19zM860 44h11v1h-11zM860 45h14v1h-14zM860 46h16v1h-16zM860 47h1v1h-1zM860 48h3v1h-3zM860 49h9v1h-9zM860 50h6v1h-6zM860 51h8v1h-8zM860 52h18v1h-18zM860 53h20v1h-20zM860 54h15v1h-15zM860 55h4v1h-4zM860 56h3v1h-3zM860 57h8v1h-8zM860 58h12v1h-12zM860 59h11v1h-11zM860 60h7v1h-7zM860 61h8v1h-8zM860 62h8v1h-8zM860 63h14v1h-14zM860 64h14v1h-14zM860 65h12v1h-12zM860 66h16v1h-16zM860 67h20v1h-20zM860 68h9v1h-9zM860 69h13v1h-13zM860 70h11v1h-11zM860 71h4v1h-4zM860 72h10v1h-10zM860 78h9v1h-9zM860 79h10v1h-10zM860 80h13v1h-13zM860 81h11v1h-11zM860 82h10v1h-10zM860 83h18v1h-18zM860 84h16v1h-16zM860 85h16v1h-16zM860 86h18v1h-18zM860 87h7v1h-7zM860 88h6v1h-6zM860 89h15v1h-15zM860 90h16v1h-16zM860 91h11v1h-11zM860 92h4v1h-4zM860 93h7v1h-7zM860 94h13v1h-13zM860 95h13v1h-13zM860 97h19v1h-19zM860 98h8v1h-8zM860 99h14v1h-14zM860 100h14v1h-14zM860 101h16v1h-16zM860 102h16v1h-16zM860 103h6v1h-6zM860 104h7v1h-7zM860 107h1v1h-1zM860 108h5v1h-5zM860 112h3v1h-3zM860 113h17v1h-17zM860 114h5v1h-5zM860 115h4v1h-4zM860 116h21v1h-21zM860 117h1v1h-1zM860 118h1v1h-1zM860 119h16v1h-16zM860 120h17v1h-17zM860 121h17v1h-17zM860 122h20v1h-20zM860 123h8v1h-8zM860 124h21v1h-21zM860 125h16v1h-16zM860 126h18v1h-18zM860 127h19v1h-19zM860 128h15v1h-15zM860 129h15v1h-15zM860 130h12v1h-12zM860 131h7v1h-7zM860 132h19v1h-19zM860 133h19v1h-19zM860 134h6v1h-6zM860 135h13v1h-13zM860 136h9v1h-9zM860 137h17v1h-17zM860 138h8v1h-8zM860 139h9v1h-9zM860 140h20v1h-20zM860 141h13v1h-13zM860 142h18v1h-18zM860 143h19v1h-19zM860 144h5v1h-5zM860 145h13v1h-13zM860 146h13v1h-13zM860 147h15v1h-15zM860 148h14v1h-14zM860 149h16v1h-16zM860 150h14v1h-14zM860 151h10v1h-10zM860 152h18v1h-18zM860 153h15v1h-15zM860 154h12v1h-12zM860 155h16v1h-16zM860 156h17v1h-17zM860 158h6v1h-6zM860 159h11v1h-11zM860 160h12v1h-12zM860 161h19v1h-19zM860 162h19v1h-19zM860 163h19v1h-19zM860 164h11v1h-11zM860 165h9v1h-9zM860 166h11v1h-11zM860 167h6v1h-6zM860 168h10v1h-10zM860 169h4v1h-4zM860 170h8v1h-8zM860 171h7v1h-7zM860 172h19v1h-19zM860 173h15v1h-15zM860 174h22v1h-22zM860 175h21v1h-21zM860 176h15v1h-15zM860 177h17v1h-17zM860 178h18v1h-18zM860 179h22v1h-22zM860 180h21v1h-21zM860 181h11v1h-11zM860 182h12v1h-12zM860 183h17v1h-17zM860 184h17v1h-17zM860 185h19v1h-19zM860 186h24v1h-24zM860 187h21v1h-21zM860 188h4v1h-4zM860 189h6v1h-6zM860 190h23v1h-23zM860 191h22v1h-22zM860 192h22v1h-22zM860 193h17v1h-17zM860 194h19v1h-19zM860 195h16v1h-16zM860 196h15v1h-15zM860 197h20v1h-20zM860 198h22v1h-22zM860 199h22v1h-22zM860 200h3v1h-3zM860 201h20v1h-20zM860 202h22v1h-22zM860 203h28v1h-28zM860 204h28v1h-28zM860 205h28v1h-28zM860 206h21v1h-21zM860 207h24v1h-24zM860 208h28v1h-28zM860 209h18v1h-18zM860 210h20v1h-20zM860 211h19v1h-19zM860 212h28v1h-28zM860 213h28v1h-28zM860 214h28v1h-28zM860 215h22v1h-22zM860 221h28v1h-28zM860 222h28v1h-28zM860 223h28v1h-28zM860 224h26v1h-26zM860 225h26v1h-26zM860 226h28v1h-28zM860 227h28v1h-28zM860 228h25v1h-25zM860 229h28v1h-28zM860 230h28v1h-28zM860 231h28v1h-28zM860 232h5v1h-5zM860 233h5v1h-5zM860 234h28v1h-28zM860 235h26v1h-26zM860 236h28v1h-28zM860 237h28v1h-28zM860 238h28v1h-28zM860 239h28v1h-28zM860 240h28v1h-28zM860 241h3v1h-3zM860 242h4v1h-4zM860 243h20v1h-20zM860 244h23v1h-23zM860 245h21v1h-21zM860 246h21v1h-21zM860 247h26v1h-26zM860 248h24v1h-24zM860 249h24v1h-24zM860 250h18v1h-18zM860 251h17v1h-17zM860 252h28v1h-28zM860 253h22v1h-22zM860 254h20v1h-20zM860 255h20v1h-20zM860 256h20v1h-20zM860 257h10v1h-10zM860 258h11v1h-11zM860 259h19v1h-19zM860 260h16v1h-16zM860 261h17v1h-17zM860 262h3v1h-3zM860 263h15v1h-15zM860 264h18v1h-18zM860 265h6v1h-6zM860 266h7v1h-7zM860 267h10v1h-10zM860 268h18v1h-18zM860 269h19v1h-19zM860 270h15v1h-15zM860 271h14v1h-14zM860 272h18v1h-18zM860 273h18v1h-18zM860 274h16v1h-16zM860 275h17v1h-17zM860 276h13v1h-13zM860 277h13v1h-13zM860 278h19v1h-19zM860 279h14v1h-14zM860 280h6v1h-6zM860 281h6v1h-6zM860 282h18v1h-18zM860 283h4v1h-4zM860 284h6v1h-6zM860 285h14v1h-14zM860 286h6v1h-6zM860 287h20v1h-20zM860 288h17v1h-17zM860 289h19v1h-19zM860 290h13v1h-13zM860 291h16v1h-16zM860 293h12v1h-12zM860 294h13v1h-13zM860 295h19v1h-19zM860 296h7v1h-7zM860 297h14v1h-14zM860 301h6v1h-6zM860 302h4v1h-4zM860 303h6v1h-6zM860 304h11v1h-11zM860 305h6v1h-6zM860 306h9v1h-9zM860 307h12v1h-12zM860 308h10v1h-10zM860 309h16v1h-16zM860 310h3v1h-3zM860 311h4v1h-4zM860 312h5v1h-5zM860 313h16v1h-16zM860 314h13v1h-13zM860 315h13v1h-13zM860 317h3v1h-3zM860 318h11v1h-11zM860 319h13v1h-13zM860 320h12v1h-12zM860 321h9v1h-9zM860 322h11v1h-11zM860 323h10v1h-10zM860 324h9v1h-9zM860 325h10v1h-10zM860 326h14v1h-14zM860 327h14v1h-14zM860 328h8v1h-8zM860 329h21v1h-21zM860 330h15v1h-15zM860 331h16v1h-16zM860 332h13v1h-13zM860 333h15v1h-15zM860 334h6v1h-6zM860 335h8v1h-8zM860 336h9v1h-9zM860 337h19v1h-19zM860 338h6v1h-6zM860 339h5v1h-5zM860 340h15v1h-15zM860 341h13v1h-13zM860 342h12v1h-12zM860 344h9v1h-9zM860 345h17v1h-17zM860 346h18v1h-18zM860 347h10v1h-10zM860 348h7v1h-7zM860 349h5v1h-5zM860 351h3v1h-3zM860 352h12v1h-12zM860 353h13v1h-13zM860 354h5v1h-5zM860 355h2v1h-2zM860 356h25v1h-25zM860 359h13v1h-13zM860 360h15v1h-15zM860 361h19v1h-19zM860 362h21v1h-21zM860 363h12v1h-12zM860 364h10v1h-10zM860 365h11v1h-11zM860 366h7v1h-7zM860 367h13v1h-13zM860 368h15v1h-15zM860 369h5v1h-5zM860 370h2v1h-2zM860 371h5v1h-5zM860 372h15v1h-15zM860 373h8v1h-8zM860 374h8v1h-8zM860 375h14v1h-14zM860 376h10v1h-10zM860 377h11v1h-11zM860 382h6v1h-6zM860 383h15v1h-15zM860 388h2v1h-2zM860 389h6v1h-6zM860 390h10v1h-10zM860 391h8v1h-8zM860 392h16v1h-16zM860 393h12v1h-12zM860 394h10v1h-10zM860 395h3v1h-3zM860 396h11v1h-11zM860 397h10v1h-10zM860 398h14v1h-14zM860 399h8v1h-8zM860 400h11v1h-11zM860 401h4v1h-4zM860 402h9v1h-9zM860 403h7v1h-7zM860 404h13v1h-13zM860 405h9v1h-9zM860 406h14v1h-14zM860 407h9v1h-9zM860 408h13v1h-13zM860 409h10v1h-10zM860 410h20v1h-20zM860 411h19v1h-19zM860 412h18v1h-18zM860 413h4v1h-4zM860 414h5v1h-5zM860 415h4v1h-4zM860 416h19v1h-19zM860 417h17v1h-17zM860 418h10v1h-10zM860 419h10v1h-10zM860 420h11v1h-11zM860 421h10v1h-10zM860 422h4v1h-4zM860 423h5v1h-5zM860 424h3v1h-3zM860 425h5v1h-5zM860 426h14v1h-14zM860 432h2v1h-2zM860 433h7v1h-7zM860 434h16v1h-16zM860 435h15v1h-15zM860 436h14v1h-14zM860 437h10v1h-10zM860 442h10v1h-10zM860 447h4v1h-4zM860 448h17v1h-17zM860 449h14v1h-14zM860 450h9v1h-9zM860 451h5v1h-5zM860 452h14v1h-14zM860 453h18v1h-18zM860 454h15v1h-15zM860 455h15v1h-15zM860 456h10v1h-10zM860 457h17v1h-17zM860 458h19v1h-19zM860 459h11v1h-11zM860 460h17v1h-17zM860 461h14v1h-14zM860 462h12v1h-12zM860 463h12v1h-12zM860 464h16v1h-16zM860 465h18v1h-18zM860 466h16v1h-16zM860 467h14v1h-14zM860 468h14v1h-14zM860 469h15v1h-15zM860 470h13v1h-13zM860 471h14v1h-14zM860 472h4v1h-4zM860 473h5v1h-5zM860 474h23v1h-23zM860 475h15v1h-15zM860 476h8v1h-8zM860 477h9v1h-9zM860 478h13v1h-13zM860 479h5v1h-5zM860 480h3v1h-3zM860 481h17v1h-17zM860 482h18v1h-18zM860 483h18v1h-18zM860 484h6v1h-6zM860 485h15v1h-15zM860 486h7v1h-7zM860 487h7v1h-7zM860 488h6v1h-6zM860 489h3v1h-3zM860 491h1v1h-1zM860 495h5v1h-5zM860 496h12v1h-12zM860 497h12v1h-12zM860 498h12v1h-12zM860 499h2v1h-2zM860 501h4v1h-4zM860 502h8v1h-8zM860 503h16v1h-16zM860 504h8v1h-8zM860 505h9v1h-9zM860 506h5v1h-5zM860 507h19v1h-19zM860 508h10v1h-10zM860 509h16v1h-16zM860 510h16v1h-16zM860 511h15v1h-15zM860 512h8v1h-8zM860 513h7v1h-7zM860 514h6v1h-6zM860 515h8v1h-8zM860 516h9v1h-9zM860 517h8v1h-8zM860 518h19v1h-19zM860 519h17v1h-17zM860 520h14v1h-14zM860 521h15v1h-15zM860 522h8v1h-8zM860 523h15v1h-15zM860 524h12v1h-12zM860 525h10v1h-10zM860 526h11v1h-11zM860 527h18v1h-18zM860 528h9v1h-9zM860 533h17v1h-17zM860 534h2v1h-2zM860 539h9v1h-9zM860 540h15v1h-15zM860 541h7v1h-7zM860 542h6v1h-6zM860 543h4v1h-4zM860 544h12v1h-12zM860 545h12v1h-12zM860 546h4v1h-4zM860 547h6v1h-6zM860 548h5v1h-5zM860 549h16v1h-16zM860 550h15v1h-15zM860 551h11v1h-11zM860 552h11v1h-11zM860 553h10v1h-10zM860 554h5v1h-5zM860 555h15v1h-15zM860 556h16v1h-16zM860 557h13v1h-13zM860 558h6v1h-6zM860 559h6v1h-6zM860 560h7v1h-7zM860 561h9v1h-9zM860 562h11v1h-11zM860 563h7v1h-7zM860 564h11v1h-11zM860 565h10v1h-10zM860 566h19v1h-19zM860 567h22v1h-22zM860 568h18v1h-18zM860 569h15v1h-15zM860 570h16v1h-16zM860 571h6v1h-6zM860 572h9v1h-9zM860 573h13v1h-13zM860 574h20v1h-20zM860 575h9v1h-9zM860 576h11v1h-11zM860 577h13v1h-13zM860 578h11v1h-11zM860 579h14v1h-14zM860 580h3v1h-3zM860 585h14v1h-14zM860 586h1v1h-1zM860 587h7v1h-7zM860 588h8v1h-8zM860 589h6v1h-6zM860 594h18v1h-18zM860 595h15v1h-15zM860 597h11v1h-11zM860 601h7v1h-7zM860 602h7v1h-7zM860 603h7v1h-7zM860 604h19v1h-19zM860 605h16v1h-16zM860 606h19v1h-19zM860 607h15v1h-15zM860 608h14v1h-14zM860 609h16v1h-16zM860 610h14v1h-14zM860 611h15v1h-15zM860 612h11v1h-11zM860 613h14v1h-14zM860 614h19v1h-19zM860 615h10v1h-10zM860 616h17v1h-17zM860 617h22v1h-22zM860 618h7v1h-7zM860 619h11v1h-11zM860 620h9v1h-9zM860 621h17v1h-17zM860 622h9v1h-9zM860 623h9v1h-9zM860 624h18v1h-18zM860 625h16v1h-16zM860 626h14v1h-14zM860 627h14v1h-14zM860 628h14v1h-14zM860 629h15v1h-15zM860 630h12v1h-12zM860 631h18v1h-18zM860 632h5v1h-5zM860 633h8v1h-8zM860 634h19v1h-19zM860 635h17v1h-17zM860 636h13v1h-13zM860 638h5v1h-5zM860 639h10v1h-10zM860 640h15v1h-15zM860 641h12v1h-12zM860 642h17v1h-17zM860 643h15v1h-15zM860 644h12v1h-12zM860 645h2v1h-2zM860 646h16v1h-16zM860 647h16v1h-16zM860 648h13v1h-13zM860 649h7v1h-7zM860 650h7v1h-7zM860 651h17v1h-17zM860 652h22v1h-22zM860 653h4v1h-4zM860 654h18v1h-18zM860 655h17v1h-17zM860 656h15v1h-15zM860 657h11v1h-11zM860 658h14v1h-14zM860 659h10v1h-10zM860 660h11v1h-11zM860 661h10v1h-10zM860 662h13v1h-13zM860 663h15v1h-15zM860 664h14v1h-14zM860 665h9v1h-9zM860 670h15v1h-15zM860 671h13v1h-13zM860 672h9v1h-9zM860 673h8v1h-8zM860 674h13v1h-13zM860 675h13v1h-13zM860 676h15v1h-15zM860 677h15v1h-15zM860 678h14v1h-14zM860 679h11v1h-11zM860 680h15v1h-15zM860 681h16v1h-16zM860 682h14v1h-14zM860 683h19v1h-19zM860 684h24v1h-24zM860 685h22v1h-22zM860 686h4v1h-4zM860 687h16v1h-16zM860 688h16v1h-16zM860 689h17v1h-17zM860 690h12v1h-12zM860 691h20v1h-20zM860 692h20v1h-20zM860 693h3v1h-3zM860 694h2v1h-2zM860 697h14v1h-14zM860 698h10v1h-10zM860 699h11v1h-11zM860 700h10v1h-10zM860 701h6v1h-6zM860 702h12v1h-12zM860 703h12v1h-12zM860 704h12v1h-12zM860 705h13v1h-13zM860 706h19v1h-19zM860 707h19v1h-19zM860 708h1v1h-1zM860 709h14v1h-14zM860 710h11v1h-11zM860 711h8v1h-8zM860 712h8v1h-8zM860 717h9v1h-9zM860 718h6v1h-6zM860 719h12v1h-12zM860 720h11v1h-11zM860 721h9v1h-9zM860 722h20v1h-20zM860 723h16v1h-16zM860 724h13v1h-13zM860 725h11v1h-11zM860 726h13v1h-13zM860 727h10v1h-10zM860 728h9v1h-9zM860 729h9v1h-9zM860 730h8v1h-8zM860 731h7v1h-7zM860 732h15v1h-15zM860 733h15v1h-15zM860 734h14v1h-14zM860 735h14v1h-14zM860 736h17v1h-17zM860 737h12v1h-12zM860 738h14v1h-14zM860 739h7v1h-7zM860 742h1v1h-1zM860 744h19v1h-19zM860 745h16v1h-16zM860 746h10v1h-10zM860 747h9v1h-9zM860 750h8v1h-8zM860 751h10v1h-10zM860 752h16v1h-16zM860 753h15v1h-15zM860 754h11v1h-11zM860 755h9v1h-9zM860 756h10v1h-10zM860 757h16v1h-16zM860 758h16v1h-16zM860 759h18v1h-18zM860 760h5v1h-5zM860 761h15v1h-15zM860 762h16v1h-16zM860 763h9v1h-9zM860 764h3v1h-3zM860 765h7v1h-7zM860 766h6v1h-6zM860 767h5v1h-5zM860 768h7v1h-7zM860 769h3v1h-3zM860 774h9v1h-9zM860 775h5v1h-5zM860 776h10v1h-10zM860 777h8v1h-8z"/><path fill="#0c0c4c" d="M860 73h19v1h-19zM860 74h19v1h-19zM860 75h19v1h-19zM860 76h22v1h-22zM860 77h19v1h-19zM860 109h20v1h-20zM860 110h20v1h-20zM860 111h23v1h-23zM860 216h22v1h-22zM860 217h22v1h-22zM860 218h26v1h-26zM860 219h25v1h-25zM860 220h24v1h-24zM860 298h21v1h-21zM860 299h21v1h-21zM860 300h21v1h-21zM860 378h24v1h-24zM860 379h21v1h-21zM860 380h24v1h-24zM860 381h22v1h-22zM860 384h18v1h-18zM860 385h17v1h-17zM860 386h17v1h-17zM860 387h21v1h-21zM860 427h30v1h-30zM860 428h27v1h-27zM860 429h31v1h-31zM860 430h29v1h-29zM860 431h29v1h-29zM860 438h21v1h-21zM860 439h22v1h-22zM860 440h19v1h-19zM860 441h19v1h-19zM860 443h23v1h-23zM860 444h23v1h-23zM860 445h21v1h-21zM860 446h22v1h-22zM860 492h18v1h-18zM860 493h18v1h-18zM860 494h21v1h-21zM860 529h21v1h-21zM860 530h19v1h-19zM860 531h20v1h-20zM860 532h21v1h-21zM860 535h21v1h-21zM860 536h21v1h-21zM860 537h17v1h-17zM860 538h19v1h-19zM860 581h23v1h-23zM860 582h22v1h-22zM860 583h23v1h-23zM860 584h19v1h-19zM860 590h18v1h-18zM860 591h20v1h-20zM860 592h19v1h-19zM860 593h20v1h-20zM860 598h20v1h-20zM860 599h21v1h-21zM860 600h17v1h-17zM860 666h19v1h-19zM860 667h17v1h-17zM860 668h20v1h-20zM860 669h20v1h-20zM860 713h19v1h-19zM860 714h15v1h-15zM860 715h19v1h-19zM860 716h19v1h-19zM860 770h14v1h-14zM860 771h13v1h-13zM860 772h14v1h-14zM860 773h13v1h-13z"/><rect x="860" y="19" width="80" height="1" fill="#9a9a9a"/><rect x="860" y="97" width="80" height="1" fill="#9a9a9a"/><rect x="860" y="175" width="80" height="1" fill="#9a9a9a"/><rect x="860" y="253" width="80" height="1" fill="#9a9a9a"/><rect x="860" y="331" width="80" height="1" fill="#9a9a9a"/><rect x="860" y="409" width="80" height="1" fill="#9a9a9a"/><rect x="860" y="487" width="80" height="1" fill="#9a9a9a"/><rect x="860" y="565" width="80" height="1" fill="#9a9a9a"/><rect x="860" y="643" width="80" height="1" fill="#9a9a9a"/><rect x="860" y="721" width="80" height="1" fill="#9a9a9a"/><polyline fill="none" stroke="#38e038" stroke-width="1" shape-rendering="auto" points="861.7,12.1 863.7,14.0 871.3,15.3 873.4,17.9 876.4,20.4 879.5,22.9 880.9,25.5 886.6,26.8 880.9,30.0 882.9,32.8 886.3,35.5 888.5,38.3 881.5,42.1 890.5,46.6 888.5,51.0 889.9,53.6 893.7,56.2 890.5,60.0 893.4,62.5 895.0,65.0 892.4,69.0 896.2,70.8 891.1,72.8 892.4,75.3 898.1,77.9 899.4,80.4 896.8,83.0 899.4,85.5 903.9,88.0 900.7,91.9 902.7,95.4 902.0,98.9 903.4,101.5 907.0,104.0 905.1,107.0 908.2,110.5 909.0,114.0 908.0,117.0 909.4,120.0 907.7,123.0 908.1,125.9 911.5,128.8 909.6,132.0 912.4,134.5 912.8,137.0 910.9,140.3 911.9,143.8 914.7,147.3 914.2,150.5 912.8,153.7 911.4,156.3 914.2,158.8 912.2,161.4 913.4,164.0 915.8,167.0 915.7,169.9 919.2,172.9 921.5,176.1 922.4,179.2 921.7,181.9 923.4,184.6 921.3,187.3 923.0,190.0 924.2,192.6 923.1,195.1 926.4,197.7 924.9,200.2 926.8,202.8 929.9,206.0 929.4,209.1 932.6,212.3 934.4,215.1 934.7,217.8 936.4,220.6 939.6,224.3 942.0,228.0 941.2,230.5 942.4,233.0 940.8,235.5 942.0,238.0 939.6,241.0 935.2,244.5 928.8,248.0 921.4,251.5 914.7,255.0 912.2,259.0 911.9,261.5 910.9,264.0 912.8,266.6 911.9,269.1 914.3,271.7 912.0,274.2 914.2,276.8 913.4,279.3 912.6,281.9 914.7,284.4 915.5,287.2 913.4,290.0 912.4,292.6 914.6,295.1 912.3,297.7 912.8,300.3 914.6,302.9 914.7,305.4 913.2,307.9 914.1,310.5 914.0,313.5 911.2,316.5 912.2,319.5 912.8,322.0 909.0,324.5 909.6,327.0 909.8,330.2 908.3,333.5 908.5,336.1 910.2,338.6 904.5,341.2 905.7,343.8 905.8,346.3 902.9,348.9 903.0,351.4 899.1,353.9 897.5,356.5 898.1,359.1 897.5,361.6 893.7,365.4 897.5,369.2 892.4,371.2 895.6,375.6 901.3,380.0 897.6,382.5 896.2,385.0 898.2,387.5 898.0,390.0 898.3,393.0 904.0,396.0 903.9,399.0 898.8,403.0 897.5,406.2 897.5,409.4 901.3,413.0 898.0,417.0 902.6,418.3 898.0,422.0 903.2,425.3 901.7,428.1 898.8,431.0 902.0,435.0 898.0,438.0 898.0,441.0 901.4,443.7 901.3,446.4 898.9,448.9 899.8,451.5 897.5,454.0 898.8,457.2 901.3,460.4 901.1,463.6 898.0,466.8 897.0,469.3 900.8,471.9 901.3,474.4 898.7,477.2 898.0,480.0 899.1,483.2 898.8,486.5 898.4,489.7 901.3,492.9 901.3,495.4 900.0,498.0 898.6,501.2 899.4,504.4 900.0,508.2 896.8,511.4 891.7,512.7 896.2,515.8 896.6,518.4 892.7,520.9 894.3,523.5 895.3,526.7 891.7,529.9 899.4,532.4 894.9,535.0 893.4,537.5 894.3,540.0 889.2,542.6 890.4,545.2 888.5,547.8 886.6,550.3 893.7,554.1 889.7,556.7 887.3,559.2 889.2,561.8 885.4,564.3 889.2,566.9 882.8,570.7 884.7,574.0 882.8,575.0 886.6,579.0 887.2,581.5 885.4,584.0 891.7,586.6 885.3,589.2 882.8,591.7 884.6,594.9 884.0,598.0 885.4,601.5 888.5,605.0 888.0,607.9 884.0,610.8 879.6,613.4 879.6,616.0 884.0,618.5 884.0,621.0 883.9,624.0 887.3,627.0 886.0,630.0 882.9,632.5 884.8,635.1 883.4,637.6 882.3,640.8 884.7,644.0 886.5,647.0 881.9,650.0 883.4,653.0 887.5,656.0 886.3,658.9 889.2,661.9 888.5,664.5 883.4,667.0 883.8,670.5 886.1,674.0 886.0,676.6 884.1,679.1 885.4,681.7 882.3,684.3 883.9,686.9 880.8,689.4 881.6,692.0 884.3,694.6 883.4,697.1 885.4,699.7 885.8,702.3 881.7,704.9 883.3,707.4 880.9,710.0 881.2,712.9 886.6,715.8 883.8,718.6 887.7,721.5 887.9,724.4 884.8,727.3 885.2,730.2 882.2,733.1 883.4,736.0 880.9,738.9 881.1,741.5 884.3,744.1 883.7,746.8 885.4,749.4 887.0,752.1 884.3,754.8 886.7,757.6 884.3,760.3 886.1,763.0 886.0,766.0 878.8,769.0 878.6,772.0 876.0,774.6 871.0,777.3 868.0,781.0"/><polyline fill="none" stroke="#c83232" stroke-width="1.4" shape-rendering="auto" points="861.0,2.0 859.9,7.5 861.0,13.0 861.7,19.0 865.1,24.8 868.8,30.6 872.6,37.0 871.2,42.1 872.0,47.2 870.0,53.6 870.0,61.3 870.5,65.5 870.9,69.8 871.3,74.0 871.0,78.2 870.7,82.3 871.8,86.4 872.0,90.6 870.0,98.3 869.4,105.0 870.6,110.8 872.0,116.7 873.2,120.9 873.0,125.0 871.6,129.2 872.6,133.3 873.8,138.4 873.8,143.5 873.9,148.6 872.0,153.7 872.0,158.8 872.1,163.1 874.0,167.3 873.9,171.6 876.4,179.2 875.7,184.6 877.0,190.0 878.3,197.7 882.8,204.0 885.4,211.7 891.1,214.9 899.4,218.7 887.9,223.2 890.0,228.9 891.1,234.7 885.7,239.8 879.9,244.9 875.1,250.0 872.6,256.4 872.7,261.0 873.1,265.6 873.7,270.1 874.0,274.7 873.2,279.3 873.2,284.4 872.6,289.5 872.9,293.7 871.2,297.9 872.6,302.1 872.8,306.3 872.0,310.5 872.3,314.8 870.9,319.0 871.3,323.2 871.3,327.5 872.3,331.8 871.3,336.0 870.6,340.1 869.7,344.2 871.4,348.3 870.6,352.4 870.0,356.5 870.5,360.5 870.7,364.5 869.1,368.5 870.3,372.5 871.0,376.5 870.5,380.5 870.7,384.5 871.5,388.7 870.2,392.8 871.8,397.0 871.5,401.1 870.2,405.3 870.3,409.4 870.0,413.6 869.7,417.7 869.6,421.9 869.9,426.0 870.4,430.2 870.7,434.3 869.7,438.5 870.4,442.6 871.5,446.8 871.3,450.9 871.1,455.1 870.0,459.2 871.7,463.4 870.0,467.5 870.6,471.7 870.2,475.8 870.7,480.0 871.4,484.1 870.2,488.2 871.8,492.3 871.3,496.4 869.6,500.5 869.9,504.5 870.5,508.6 871.2,512.7 870.9,516.8 871.3,520.9 870.1,525.0 871.5,529.1 869.9,533.2 871.4,537.3 871.0,541.4 870.6,545.5 870.8,549.5 870.4,553.6 870.1,557.7 870.8,561.8 870.2,565.9 870.7,570.0 870.5,574.1 871.7,578.3 871.9,582.4 869.9,586.5 870.3,590.7 871.4,594.8 870.0,598.9 870.6,603.0 869.8,607.2 871.6,611.3 871.5,615.4 870.3,619.6 871.0,623.7 870.2,627.8 870.1,632.0 871.5,636.1 872.0,640.2 871.4,644.3 870.0,648.5 870.8,652.6 871.7,656.7 872.1,660.9 871.0,665.0 872.2,669.9 870.4,674.8 872.2,679.7 871.8,684.6 870.5,688.7 869.8,692.8 869.1,696.9 869.6,701.0 870.4,705.5 871.8,710.0 871.1,714.3 871.8,718.7 871.7,723.0 871.1,727.4 870.6,731.7 870.5,736.1 870.3,740.4 870.7,744.6 871.3,748.8 870.9,753.1 871.6,757.3 871.8,761.5 869.7,765.5 867.1,769.5 865.0,773.5 860.5,779.5"/><circle cx="873" cy="46" r="3" fill="#000" stroke="#c83030" stroke-width="1" shape-rendering="auto"/><polyline points="935.5,781 937.5,778.5 940,777.5" fill="none" stroke="#38e038" stroke-width="1" shape-rendering="auto"/></g></svg><div class="ab mono" style="left:3px;top:3px;width:311px;height:45px;background:#fff;color:#000;font-size:11.67px;line-height:14px;white-space:pre"><div class="ab" style="left:1.5px;top:2px">Screen Capture Time: 2025-11-06 21:29:26 UTC</div><div class="ab" style="left:1.5px;top:16px">143048017 Hz</div><div class="ab" style="left:1.5px;top:30px">Config = V8</div></div><svg class="ab" style="left:5px;top:53px" width="99" height="39" shape-rendering="crispEdges"><defs><linearGradient id="cg" x1="0" x2="1" y1="0" y2="0"><stop offset="0.0" stop-color="#000000"/><stop offset="0.215" stop-color="#000006"/><stop offset="0.354" stop-color="#05057a"/><stop offset="0.455" stop-color="#500587"/><stop offset="0.525" stop-color="#8c0f73"/><stop offset="0.6" stop-color="#b4464b"/><stop offset="0.717" stop-color="#f5960c"/><stop offset="0.85" stop-color="#ffe100"/><stop offset="0.924" stop-color="#ffffff"/><stop offset="1.0" stop-color="#ffffff"/></linearGradient></defs><rect x="0" y="0" width="99" height="16" fill="url(#cg)"/><rect x="0" y="16" width="99" height="23" fill="#fff"/><path fill="#000" d="M3 16h1v4h-1zM7 16h1v4h-1zM12 16h1v4h-1zM16 16h1v4h-1zM21 16h1v7h-1zM25 16h1v4h-1zM29 16h1v4h-1zM34 16h1v4h-1zM38 16h1v4h-1zM43 16h1v10h-1zM47 16h1v4h-1zM51 16h1v4h-1zM56 16h1v4h-1zM60 16h1v4h-1zM65 16h1v7h-1zM69 16h1v4h-1zM73 16h1v4h-1zM78 16h1v4h-1zM82 16h1v4h-1zM87 16h1v10h-1zM91 16h1v4h-1zM95 16h1v4h-1z"/></svg><div class="ab sans" style="left:4px;top:79px;font-size:11px;line-height:14px;color:#000;white-space:pre">-80 dB -60</div><div class="ab sans" style="left:84px;top:79px;font-size:11px;line-height:14px;color:#000;white-space:pre">-40</div></body></html>
